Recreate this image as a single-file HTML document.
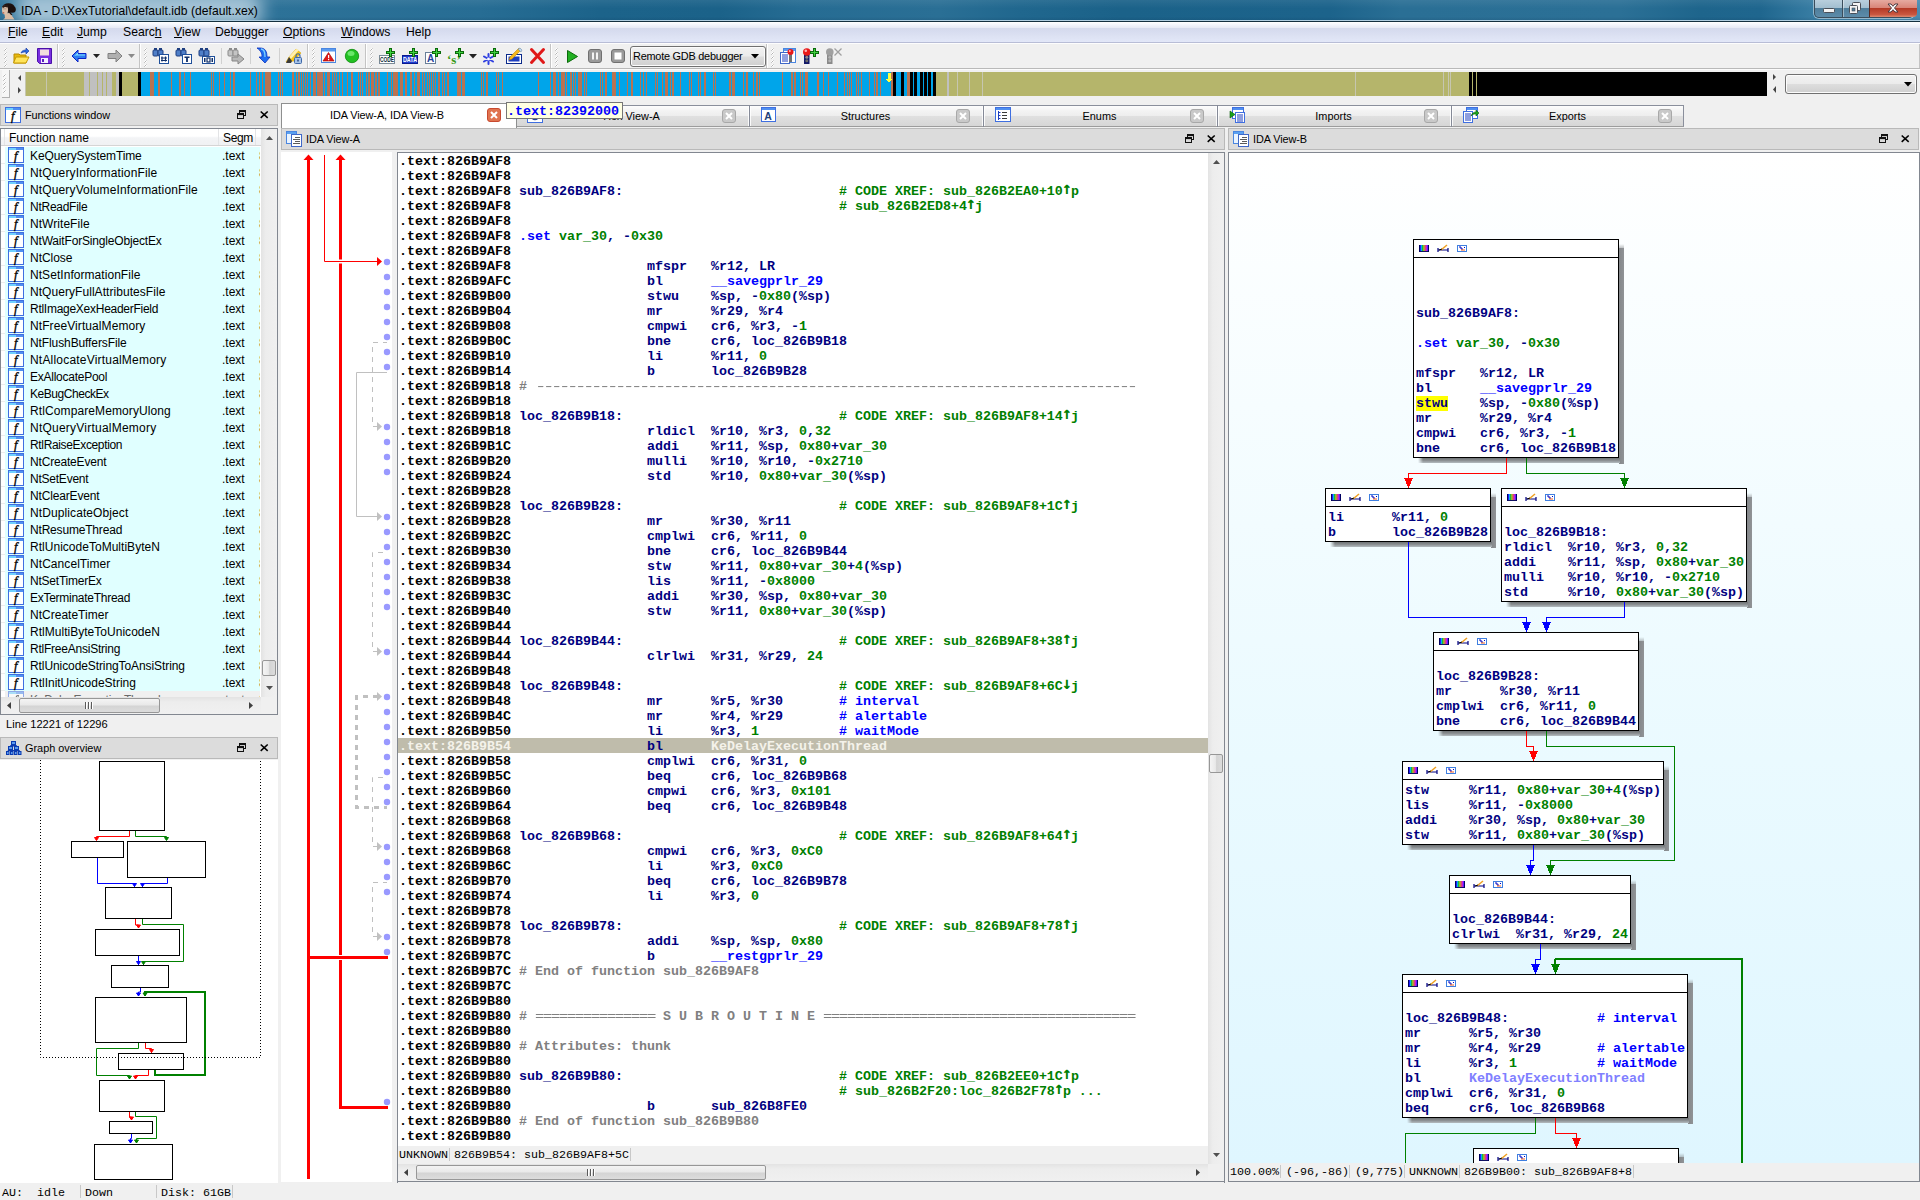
<!DOCTYPE html>
<html lang="en"><head><meta charset="utf-8"><title>IDA - D:\XexTutorial\default.idb (default.xex)</title>
<style>
*{box-sizing:border-box;margin:0;padding:0}
html,body{width:1920px;height:1200px;overflow:hidden;background:#f0f0f0}
body{position:relative;font-family:"Liberation Sans",Arial,sans-serif;font-size:12px;color:#000;line-height:1}
.a{position:absolute}
.t{position:absolute;white-space:pre;line-height:1}
.m{font-family:"Liberation Mono","DejaVu Sans Mono",monospace;font-weight:bold;font-size:13.3333px;line-height:15px;white-space:pre}
.ui{font-size:11px}
svg{position:absolute;overflow:visible}
u{text-decoration:underline;text-underline-offset:1px}
.ar{display:inline-block;width:8px;height:15px;font-family:"DejaVu Sans Mono",monospace;font-weight:bold;font-size:17px;line-height:15px;text-indent:-1.2px;vertical-align:top;position:relative;top:-3px;overflow:visible}
.th{font-weight:normal;display:inline-block;height:15px;vertical-align:top;letter-spacing:-2.4px;transform:scaleX(1.42857);transform-origin:0 50%}
.te.th{letter-spacing:-1.2px;transform:scaleX(1.17647)}
.k{color:#000}.n{color:#000080}.b{color:#0000ff}.g{color:#008000}.y{color:#808080}.w{color:#f4f2ea}.p{color:#8080ff}
</style></head>
<body>
<div class="a " style="left:0px;top:0px;width:1920px;height:22px;background:linear-gradient(93deg,#2d7298 0.00%,#2d7298 14.06%,#276d94 25.00%,#1c638a 31.25%,#1b6289 37.50%,#266c93 41.67%,#2a6f95 48.96%,#20678e 53.12%,#1b6289 58.33%,#1c638b 69.27%,#2a6f95 72.92%,#2b7096 84.38%,#1e658c 88.54%,#1f668e 91.67%,#3b80a6 94.79%,#4a8bb0 100.00%)"></div>
<div class="a " style="left:0px;top:0px;width:1920px;height:21px;background:linear-gradient(180deg,rgba(255,255,255,.07) 0%,rgba(255,255,255,0) 40%,rgba(0,0,0,0) 80%,rgba(0,30,60,.15) 100%)"></div>
<div class="a" style="left:0;top:0;width:400px;height:20px;overflow:hidden"><div class="a" style="left:16px;top:-8px;width:246px;height:36px;border-radius:14px;background:rgba(212,229,240,.72);filter:blur(9px)"></div></div>
<div class="a " style="left:0px;top:20px;width:1920px;height:1px;background:#b0cee0"></div>
<div class="a " style="left:0px;top:21px;width:1920px;height:1px;background:#14303f"></div>
<svg style="left:0px;top:2px" width="17" height="18" viewBox="0 0 17 18" ><path d="M4.500 11.500l.5 4.500-2 1.500h11.500l-4.500-6.500z" fill="#d9bca4"/><ellipse cx="8.5" cy="6" rx="6.3" ry="4.800" fill="#1e1210"/><circle cx="12.5" cy="7.500" r="3.300" fill="#1a0f0d"/><path d="M9.500 9l3 4-1.500 0-2.500-3z" fill="#1e1210"/><ellipse cx="5" cy="8" rx="3" ry="4.500" fill="#dcc1aa"/><path d="M2.200 4.500q2.500-2.500 6-1.500l-1 2.500q-2.500-1-4 .5z" fill="#2a1a15"/><rect x="2.600" y="10.300" width="1.600" height="1.200" fill="#b4533f"/><rect x="3" y="6.500" width="3.500" height=".8" fill="#9a8476"/></svg>
<div class="t " style="left:21px;top:5px;font-size:12.1px;color:#000;letter-spacing:.03px">IDA - D:\XexTutorial\default.idb (default.xex)</div>
<div class="a " style="left:1814px;top:0px;width:100px;height:18px;border:1px solid #3a4d5c;border-top:none;border-radius:0 0 5px 5px;background:linear-gradient(180deg,#b9cfdd 0%,#a3bfd0 45%,#4f7e9b 50%,#5d8caa 100%);box-shadow:0 0 0 1px rgba(255,255,255,.45)"></div>
<div class="a " style="left:1869px;top:0px;width:48px;height:17px;border-radius:0 0 4px 0;background:linear-gradient(180deg,#e6aaa0 0%,#d98578 45%,#b53a26 50%,#c9563f 85%,#dd8a70 100%);border-left:1px solid #5a2a22"></div>
<div class="a " style="left:1842px;top:0px;width:1px;height:17px;background:#3a4d5c"></div>
<div class="a " style="left:1843px;top:0px;width:1px;height:17px;background:rgba(255,255,255,.4)"></div>
<svg style="left:1823px;top:8px" width="12" height="5" viewBox="0 0 12 5" ><rect x="0.5" y="0.5" width="11" height="4" rx="1" fill="#f4f4f4" stroke="#4a4f58"/></svg>
<svg style="left:1849px;top:2px" width="12" height="12" viewBox="0 0 12 12" ><rect x="3.5" y="0.5" width="8" height="8" rx="1" fill="#f4f4f4" stroke="#4a4f58"/><rect x="0.5" y="3.5" width="8" height="8" rx="1" fill="#f4f4f4" stroke="#4a4f58"/><rect x="3" y="6" width="3" height="3" fill="#4f7e9b" stroke="#4a4f58" stroke-width=".6"/></svg>
<svg style="left:1887px;top:3px" width="12" height="10" viewBox="0 0 12 10" ><path d="M1 1h3l2 2.300 2-2.300h3l-3.500 4 3.500 4h-3l-2-2.300-2 2.300h-3l3.500-4z" fill="#fff" stroke="#4a3a40" stroke-width="1" stroke-linejoin="round"/></svg>
<div class="a " style="left:0px;top:22px;width:1920px;height:6px;background:linear-gradient(180deg,#ffffff 0%,#fafbfe 20%,#f0f3fb 55%,#e6e9f4 100%)"></div>
<div class="a " style="left:0px;top:28px;width:1920px;height:14px;background:linear-gradient(180deg,#d4daed 0%,#d8ddf0 30%,#dde2f3 60%,#e2e7f8 100%)"></div>
<div class="a " style="left:0px;top:42px;width:1920px;height:1px;background:#b8bdd6"></div>
<div class="a " style="left:0px;top:43px;width:1920px;height:1px;background:#fdfdfd"></div>
<div class="t " style="left:8px;top:26px;font-size:12.2px"><u>F</u>ile</div>
<div class="t " style="left:42px;top:26px;font-size:12.2px"><u>E</u>dit</div>
<div class="t " style="left:77px;top:26px;font-size:12.2px"><u>J</u>ump</div>
<div class="t " style="left:123px;top:26px;font-size:12.2px">Searc<u>h</u></div>
<div class="t " style="left:174px;top:26px;font-size:12.2px"><u>V</u>iew</div>
<div class="t " style="left:215px;top:26px;font-size:12.2px">Deb<u>u</u>gger</div>
<div class="t " style="left:283px;top:26px;font-size:12.2px"><u>O</u>ptions</div>
<div class="t " style="left:341px;top:26px;font-size:12.2px"><u>W</u>indows</div>
<div class="t " style="left:406px;top:26px;font-size:12.2px">Help</div>
<div class="a " style="left:0px;top:44px;width:1920px;height:25px;background:#f0f0f0"></div>
<div class="a " style="left:0px;top:68px;width:1920px;height:1px;background:#b9b9b9"></div>
<div class="a " style="left:0px;top:69px;width:1920px;height:1px;background:#fbfbfb"></div>
<svg style="left:4px;top:48px" width="4" height="20" viewBox="0 0 4 20" ><rect x="1" y="0" width="2" height="2" fill="#fff"/><rect x="0" y="1" width="2" height="2" fill="#fdfdfd"/><rect x="1" y="1" width="1" height="1" fill="#b0b0b0"/><rect x="0" y="2" width="1" height="1" fill="#c4c4c4"/><rect x="2" y="0" width="1" height="1" fill="#d0d0d0"/><rect x="1" y="4" width="2" height="2" fill="#fff"/><rect x="0" y="5" width="2" height="2" fill="#fdfdfd"/><rect x="1" y="5" width="1" height="1" fill="#b0b0b0"/><rect x="0" y="6" width="1" height="1" fill="#c4c4c4"/><rect x="2" y="4" width="1" height="1" fill="#d0d0d0"/><rect x="1" y="8" width="2" height="2" fill="#fff"/><rect x="0" y="9" width="2" height="2" fill="#fdfdfd"/><rect x="1" y="9" width="1" height="1" fill="#b0b0b0"/><rect x="0" y="10" width="1" height="1" fill="#c4c4c4"/><rect x="2" y="8" width="1" height="1" fill="#d0d0d0"/><rect x="1" y="12" width="2" height="2" fill="#fff"/><rect x="0" y="13" width="2" height="2" fill="#fdfdfd"/><rect x="1" y="13" width="1" height="1" fill="#b0b0b0"/><rect x="0" y="14" width="1" height="1" fill="#c4c4c4"/><rect x="2" y="12" width="1" height="1" fill="#d0d0d0"/><rect x="1" y="16" width="2" height="2" fill="#fff"/><rect x="0" y="17" width="2" height="2" fill="#fdfdfd"/><rect x="1" y="17" width="1" height="1" fill="#b0b0b0"/><rect x="0" y="18" width="1" height="1" fill="#c4c4c4"/><rect x="2" y="16" width="1" height="1" fill="#d0d0d0"/></svg>
<svg style="left:62px;top:48px" width="4" height="20" viewBox="0 0 4 20" ><rect x="1" y="0" width="2" height="2" fill="#fff"/><rect x="0" y="1" width="2" height="2" fill="#fdfdfd"/><rect x="1" y="1" width="1" height="1" fill="#b0b0b0"/><rect x="0" y="2" width="1" height="1" fill="#c4c4c4"/><rect x="2" y="0" width="1" height="1" fill="#d0d0d0"/><rect x="1" y="4" width="2" height="2" fill="#fff"/><rect x="0" y="5" width="2" height="2" fill="#fdfdfd"/><rect x="1" y="5" width="1" height="1" fill="#b0b0b0"/><rect x="0" y="6" width="1" height="1" fill="#c4c4c4"/><rect x="2" y="4" width="1" height="1" fill="#d0d0d0"/><rect x="1" y="8" width="2" height="2" fill="#fff"/><rect x="0" y="9" width="2" height="2" fill="#fdfdfd"/><rect x="1" y="9" width="1" height="1" fill="#b0b0b0"/><rect x="0" y="10" width="1" height="1" fill="#c4c4c4"/><rect x="2" y="8" width="1" height="1" fill="#d0d0d0"/><rect x="1" y="12" width="2" height="2" fill="#fff"/><rect x="0" y="13" width="2" height="2" fill="#fdfdfd"/><rect x="1" y="13" width="1" height="1" fill="#b0b0b0"/><rect x="0" y="14" width="1" height="1" fill="#c4c4c4"/><rect x="2" y="12" width="1" height="1" fill="#d0d0d0"/><rect x="1" y="16" width="2" height="2" fill="#fff"/><rect x="0" y="17" width="2" height="2" fill="#fdfdfd"/><rect x="1" y="17" width="1" height="1" fill="#b0b0b0"/><rect x="0" y="18" width="1" height="1" fill="#c4c4c4"/><rect x="2" y="16" width="1" height="1" fill="#d0d0d0"/></svg>
<svg style="left:144px;top:48px" width="4" height="20" viewBox="0 0 4 20" ><rect x="1" y="0" width="2" height="2" fill="#fff"/><rect x="0" y="1" width="2" height="2" fill="#fdfdfd"/><rect x="1" y="1" width="1" height="1" fill="#b0b0b0"/><rect x="0" y="2" width="1" height="1" fill="#c4c4c4"/><rect x="2" y="0" width="1" height="1" fill="#d0d0d0"/><rect x="1" y="4" width="2" height="2" fill="#fff"/><rect x="0" y="5" width="2" height="2" fill="#fdfdfd"/><rect x="1" y="5" width="1" height="1" fill="#b0b0b0"/><rect x="0" y="6" width="1" height="1" fill="#c4c4c4"/><rect x="2" y="4" width="1" height="1" fill="#d0d0d0"/><rect x="1" y="8" width="2" height="2" fill="#fff"/><rect x="0" y="9" width="2" height="2" fill="#fdfdfd"/><rect x="1" y="9" width="1" height="1" fill="#b0b0b0"/><rect x="0" y="10" width="1" height="1" fill="#c4c4c4"/><rect x="2" y="8" width="1" height="1" fill="#d0d0d0"/><rect x="1" y="12" width="2" height="2" fill="#fff"/><rect x="0" y="13" width="2" height="2" fill="#fdfdfd"/><rect x="1" y="13" width="1" height="1" fill="#b0b0b0"/><rect x="0" y="14" width="1" height="1" fill="#c4c4c4"/><rect x="2" y="12" width="1" height="1" fill="#d0d0d0"/><rect x="1" y="16" width="2" height="2" fill="#fff"/><rect x="0" y="17" width="2" height="2" fill="#fdfdfd"/><rect x="1" y="17" width="1" height="1" fill="#b0b0b0"/><rect x="0" y="18" width="1" height="1" fill="#c4c4c4"/><rect x="2" y="16" width="1" height="1" fill="#d0d0d0"/></svg>
<svg style="left:312px;top:48px" width="4" height="20" viewBox="0 0 4 20" ><rect x="1" y="0" width="2" height="2" fill="#fff"/><rect x="0" y="1" width="2" height="2" fill="#fdfdfd"/><rect x="1" y="1" width="1" height="1" fill="#b0b0b0"/><rect x="0" y="2" width="1" height="1" fill="#c4c4c4"/><rect x="2" y="0" width="1" height="1" fill="#d0d0d0"/><rect x="1" y="4" width="2" height="2" fill="#fff"/><rect x="0" y="5" width="2" height="2" fill="#fdfdfd"/><rect x="1" y="5" width="1" height="1" fill="#b0b0b0"/><rect x="0" y="6" width="1" height="1" fill="#c4c4c4"/><rect x="2" y="4" width="1" height="1" fill="#d0d0d0"/><rect x="1" y="8" width="2" height="2" fill="#fff"/><rect x="0" y="9" width="2" height="2" fill="#fdfdfd"/><rect x="1" y="9" width="1" height="1" fill="#b0b0b0"/><rect x="0" y="10" width="1" height="1" fill="#c4c4c4"/><rect x="2" y="8" width="1" height="1" fill="#d0d0d0"/><rect x="1" y="12" width="2" height="2" fill="#fff"/><rect x="0" y="13" width="2" height="2" fill="#fdfdfd"/><rect x="1" y="13" width="1" height="1" fill="#b0b0b0"/><rect x="0" y="14" width="1" height="1" fill="#c4c4c4"/><rect x="2" y="12" width="1" height="1" fill="#d0d0d0"/><rect x="1" y="16" width="2" height="2" fill="#fff"/><rect x="0" y="17" width="2" height="2" fill="#fdfdfd"/><rect x="1" y="17" width="1" height="1" fill="#b0b0b0"/><rect x="0" y="18" width="1" height="1" fill="#c4c4c4"/><rect x="2" y="16" width="1" height="1" fill="#d0d0d0"/></svg>
<svg style="left:370px;top:48px" width="4" height="20" viewBox="0 0 4 20" ><rect x="1" y="0" width="2" height="2" fill="#fff"/><rect x="0" y="1" width="2" height="2" fill="#fdfdfd"/><rect x="1" y="1" width="1" height="1" fill="#b0b0b0"/><rect x="0" y="2" width="1" height="1" fill="#c4c4c4"/><rect x="2" y="0" width="1" height="1" fill="#d0d0d0"/><rect x="1" y="4" width="2" height="2" fill="#fff"/><rect x="0" y="5" width="2" height="2" fill="#fdfdfd"/><rect x="1" y="5" width="1" height="1" fill="#b0b0b0"/><rect x="0" y="6" width="1" height="1" fill="#c4c4c4"/><rect x="2" y="4" width="1" height="1" fill="#d0d0d0"/><rect x="1" y="8" width="2" height="2" fill="#fff"/><rect x="0" y="9" width="2" height="2" fill="#fdfdfd"/><rect x="1" y="9" width="1" height="1" fill="#b0b0b0"/><rect x="0" y="10" width="1" height="1" fill="#c4c4c4"/><rect x="2" y="8" width="1" height="1" fill="#d0d0d0"/><rect x="1" y="12" width="2" height="2" fill="#fff"/><rect x="0" y="13" width="2" height="2" fill="#fdfdfd"/><rect x="1" y="13" width="1" height="1" fill="#b0b0b0"/><rect x="0" y="14" width="1" height="1" fill="#c4c4c4"/><rect x="2" y="12" width="1" height="1" fill="#d0d0d0"/><rect x="1" y="16" width="2" height="2" fill="#fff"/><rect x="0" y="17" width="2" height="2" fill="#fdfdfd"/><rect x="1" y="17" width="1" height="1" fill="#b0b0b0"/><rect x="0" y="18" width="1" height="1" fill="#c4c4c4"/><rect x="2" y="16" width="1" height="1" fill="#d0d0d0"/></svg>
<svg style="left:555px;top:48px" width="4" height="20" viewBox="0 0 4 20" ><rect x="1" y="0" width="2" height="2" fill="#fff"/><rect x="0" y="1" width="2" height="2" fill="#fdfdfd"/><rect x="1" y="1" width="1" height="1" fill="#b0b0b0"/><rect x="0" y="2" width="1" height="1" fill="#c4c4c4"/><rect x="2" y="0" width="1" height="1" fill="#d0d0d0"/><rect x="1" y="4" width="2" height="2" fill="#fff"/><rect x="0" y="5" width="2" height="2" fill="#fdfdfd"/><rect x="1" y="5" width="1" height="1" fill="#b0b0b0"/><rect x="0" y="6" width="1" height="1" fill="#c4c4c4"/><rect x="2" y="4" width="1" height="1" fill="#d0d0d0"/><rect x="1" y="8" width="2" height="2" fill="#fff"/><rect x="0" y="9" width="2" height="2" fill="#fdfdfd"/><rect x="1" y="9" width="1" height="1" fill="#b0b0b0"/><rect x="0" y="10" width="1" height="1" fill="#c4c4c4"/><rect x="2" y="8" width="1" height="1" fill="#d0d0d0"/><rect x="1" y="12" width="2" height="2" fill="#fff"/><rect x="0" y="13" width="2" height="2" fill="#fdfdfd"/><rect x="1" y="13" width="1" height="1" fill="#b0b0b0"/><rect x="0" y="14" width="1" height="1" fill="#c4c4c4"/><rect x="2" y="12" width="1" height="1" fill="#d0d0d0"/><rect x="1" y="16" width="2" height="2" fill="#fff"/><rect x="0" y="17" width="2" height="2" fill="#fdfdfd"/><rect x="1" y="17" width="1" height="1" fill="#b0b0b0"/><rect x="0" y="18" width="1" height="1" fill="#c4c4c4"/><rect x="2" y="16" width="1" height="1" fill="#d0d0d0"/></svg>
<svg style="left:771px;top:48px" width="4" height="20" viewBox="0 0 4 20" ><rect x="1" y="0" width="2" height="2" fill="#fff"/><rect x="0" y="1" width="2" height="2" fill="#fdfdfd"/><rect x="1" y="1" width="1" height="1" fill="#b0b0b0"/><rect x="0" y="2" width="1" height="1" fill="#c4c4c4"/><rect x="2" y="0" width="1" height="1" fill="#d0d0d0"/><rect x="1" y="4" width="2" height="2" fill="#fff"/><rect x="0" y="5" width="2" height="2" fill="#fdfdfd"/><rect x="1" y="5" width="1" height="1" fill="#b0b0b0"/><rect x="0" y="6" width="1" height="1" fill="#c4c4c4"/><rect x="2" y="4" width="1" height="1" fill="#d0d0d0"/><rect x="1" y="8" width="2" height="2" fill="#fff"/><rect x="0" y="9" width="2" height="2" fill="#fdfdfd"/><rect x="1" y="9" width="1" height="1" fill="#b0b0b0"/><rect x="0" y="10" width="1" height="1" fill="#c4c4c4"/><rect x="2" y="8" width="1" height="1" fill="#d0d0d0"/><rect x="1" y="12" width="2" height="2" fill="#fff"/><rect x="0" y="13" width="2" height="2" fill="#fdfdfd"/><rect x="1" y="13" width="1" height="1" fill="#b0b0b0"/><rect x="0" y="14" width="1" height="1" fill="#c4c4c4"/><rect x="2" y="12" width="1" height="1" fill="#d0d0d0"/><rect x="1" y="16" width="2" height="2" fill="#fff"/><rect x="0" y="17" width="2" height="2" fill="#fdfdfd"/><rect x="1" y="17" width="1" height="1" fill="#b0b0b0"/><rect x="0" y="18" width="1" height="1" fill="#c4c4c4"/><rect x="2" y="16" width="1" height="1" fill="#d0d0d0"/></svg>
<div class="a " style="left:57px;top:44px;width:1px;height:24px;background:#c4c4c4"></div><div class="a " style="left:58px;top:44px;width:1px;height:24px;background:#fff"></div>
<div class="a " style="left:139px;top:44px;width:1px;height:24px;background:#c4c4c4"></div><div class="a " style="left:140px;top:44px;width:1px;height:24px;background:#fff"></div>
<div class="a " style="left:307px;top:44px;width:1px;height:24px;background:#c4c4c4"></div><div class="a " style="left:308px;top:44px;width:1px;height:24px;background:#fff"></div>
<div class="a " style="left:365px;top:44px;width:1px;height:24px;background:#c4c4c4"></div><div class="a " style="left:366px;top:44px;width:1px;height:24px;background:#fff"></div>
<div class="a " style="left:550px;top:44px;width:1px;height:24px;background:#c4c4c4"></div><div class="a " style="left:551px;top:44px;width:1px;height:24px;background:#fff"></div>
<div class="a " style="left:766px;top:44px;width:1px;height:24px;background:#c4c4c4"></div><div class="a " style="left:767px;top:44px;width:1px;height:24px;background:#fff"></div>
<div class="a " style="left:1919px;top:44px;width:1px;height:24px;background:#c4c4c4"></div>
<div class="a " style="left:221px;top:48px;width:1px;height:16px;background:#d0d0d0"></div>
<div class="a " style="left:250px;top:48px;width:1px;height:16px;background:#d0d0d0"></div>
<div class="a " style="left:279px;top:48px;width:1px;height:16px;background:#d0d0d0"></div>
<svg style="left:13px;top:48px" width="16" height="16" viewBox="0 0 16 16" ><path d="M1 6h5l1 1h6v8H1z" fill="#e8b90c" stroke="#b98a00"/><path d="M0.5 15L3 9h13l-3 6z" fill="#ffe45a" stroke="#c79a00"/><path d="M8 5c1-3 4-3 5-3V0l3 3-3 3V4c-2 0-3 0-5 1z" fill="#2f6be0" stroke="#0a2fa0" stroke-width=".6"/></svg>
<svg style="left:37px;top:48px" width="16" height="16" viewBox="0 0 16 16" ><path d="M0.5 0.5h14v15h-12l-2-2z" fill="#7a2fe0" stroke="#4a10a8"/><rect x="3" y="1.5" width="9" height="6" fill="#f2dede"/><rect x="4" y="10" width="7" height="5" fill="#f4f0ff"/><rect x="5" y="11" width="2" height="3" fill="#5a20c0"/></svg>
<svg style="left:72px;top:50px" width="16" height="16" viewBox="0 0 16 16" ><path d="M0 6L6 0v3.5h8v5H6V12z" fill="#2f7df0" stroke="#0a22c8" stroke-width="1"/><path d="M2 6l4-3.5v2h7v1H4z" fill="#7fe0ff"/></svg>
<svg style="left:93px;top:54px" width="16" height="16" viewBox="0 0 16 16" ><path d="M0 0h7L3.5 4z" fill="#222"/></svg>
<svg style="left:108px;top:50px" width="16" height="16" viewBox="0 0 16 16" ><path d="M14 6L8 0v3.5H0v5h8V12z" fill="#b0b0b0" stroke="#808080" stroke-width="1"/></svg>
<svg style="left:128px;top:54px" width="16" height="16" viewBox="0 0 16 16" ><path d="M0 0h7L3.5 4z" fill="#8a8a8a"/></svg>
<svg style="left:153px;top:48px" width="16" height="16" viewBox="0 0 16 16" ><rect x="1" y="0" width="3" height="2" fill="#1f3f80"/><rect x="6" y="0" width="3" height="2" fill="#1f3f80"/><rect x="0" y="2" width="5" height="6" rx="1" fill="#4f7fc8" stroke="#1f3f80" stroke-width="1"/><rect x="5" y="2" width="5" height="6" rx="1" fill="#4f7fc8" stroke="#1f3f80" stroke-width="1"/><rect x="6.5" y="6.5" width="9" height="9" fill="#fff" stroke="#1f4f9a"/><path d="M9 8.5v5M12.5 8.5v5M8 10h6M8 12.5h6" stroke="#10306a" stroke-width="1.2" fill="none"/></svg>
<svg style="left:176px;top:48px" width="16" height="16" viewBox="0 0 16 16" ><rect x="1" y="0" width="3" height="2" fill="#1f3f80"/><rect x="6" y="0" width="3" height="2" fill="#1f3f80"/><rect x="0" y="2" width="5" height="6" rx="1" fill="#4f7fc8" stroke="#1f3f80" stroke-width="1"/><rect x="5" y="2" width="5" height="6" rx="1" fill="#4f7fc8" stroke="#1f3f80" stroke-width="1"/><rect x="6.5" y="6.5" width="9" height="9" fill="#fff" stroke="#1f4f9a"/><path d="M8.5 8.5h5v1.5h-1.6v4h-1.8v-4H8.5z" fill="#10306a"/></svg>
<svg style="left:199px;top:48px" width="16" height="16" viewBox="0 0 16 16" ><rect x="1" y="0" width="3" height="2" fill="#1f3f80"/><rect x="6" y="0" width="3" height="2" fill="#1f3f80"/><rect x="0" y="2" width="5" height="6" rx="1" fill="#4f7fc8" stroke="#1f3f80" stroke-width="1"/><rect x="5" y="2" width="5" height="6" rx="1" fill="#4f7fc8" stroke="#1f3f80" stroke-width="1"/><rect x="3.5" y="8.5" width="12" height="7" fill="#fff" stroke="#1f4f9a"/><rect x="5" y="10" width="1.5" height="4" fill="#10306a"/><rect x="8" y="10" width="3" height="4" fill="none" stroke="#10306a" stroke-width="1.2"/><rect x="12.5" y="10" width="1.5" height="4" fill="#10306a"/></svg>
<svg style="left:228px;top:48px" width="16" height="16" viewBox="0 0 16 16" ><rect x="1" y="0" width="3" height="2" fill="#8a8a8a"/><rect x="6" y="0" width="3" height="2" fill="#8a8a8a"/><rect x="0" y="2" width="5" height="6" rx="1" fill="#c4c4c4" stroke="#8a8a8a" stroke-width="1"/><rect x="5" y="2" width="5" height="6" rx="1" fill="#c4c4c4" stroke="#8a8a8a" stroke-width="1"/><path d="M4 9h6V6l6 5-6 5v-3H4z" fill="#b8b8b8" stroke="#858585"/></svg>
<svg style="left:258px;top:48px" width="16" height="16" viewBox="0 0 16 16" ><path d="M2 0c5 0 7 3 7 9h3l-5 6-6-6h3c0-4-1-6-5-9z" fill="#1f6df0" stroke="#0a30c0" stroke-width=".8"/><path d="M3 1c3 0 4 3 4 8" stroke="#7fd0ff" stroke-width="1.3" fill="none"/></svg>
<svg style="left:286px;top:48px" width="16" height="16" viewBox="0 0 16 16" ><path d="M0 14l3-5 7-8 5 4-7 8z" fill="#f6c61a" stroke="#d09a00" stroke-width=".5"/><path d="M3 9l7-8 3 1-8 9z" fill="#fff0b0"/><path d="M3 9l3 4-1 2H0z" fill="#3a3a3a"/><rect x="8.5" y="9.5" width="7" height="6" rx="1" fill="#a8c4e8" stroke="#3f68a8"/><path d="M10 9.5V8c0-3 4-3 4 0v1.5" fill="none" stroke="#3f68a8" stroke-width="1.2"/><rect x="11.3" y="11.5" width="1.4" height="2" fill="#1f3f7a"/></svg>
<svg style="left:321px;top:48px" width="16" height="16" viewBox="0 0 16 16" ><rect x="0.5" y="0.5" width="14" height="14" fill="#fff" stroke="#4a86e0"/><rect x="1" y="1" width="13" height="2.5" fill="#5a9af0"/><path d="M7.5 4.5l5.5 8.5H2z" fill="#e01818" stroke="#a00000" stroke-width=".6"/><rect x="7" y="7" width="1.2" height="3.2" fill="#fff"/><rect x="7" y="11" width="1.2" height="1.2" fill="#fff"/></svg>
<svg style="left:345px;top:49px" width="16" height="16" viewBox="0 0 16 16" ><circle cx="7" cy="7" r="6.7" fill="#22c022" stroke="#0a8a0a" stroke-width=".8"/><ellipse cx="6" cy="4.5" rx="3.5" ry="2.5" fill="#7df07d" opacity=".8"/></svg>
<svg style="left:379px;top:48px" width="16" height="16" viewBox="0 0 16 16" ><rect x="0.5" y="7.5" width="15" height="8" fill="#fff" stroke="#7a8a98"/><text x="1" y="14.3" font-family="Liberation Sans" font-weight="bold" font-size="6.5" fill="#0a2a3a" textLength="14" lengthAdjust="spacingAndGlyphs">CODE</text><path d="M10 0h3v3h3v3h-3v3h-3v-3h-3v-3h3z" fill="#0a6a0a"/><path d="M11 1h1v3h3v1h-3v3h-1v-3h-3v-1h3z" fill="#3fd03f"/></svg>
<svg style="left:402px;top:48px" width="16" height="16" viewBox="0 0 16 16" ><rect x="0.5" y="7.5" width="15" height="8" fill="#1f3fd0" stroke="#0a1a90"/><text x="1" y="14.3" font-family="Liberation Sans" font-weight="bold" font-size="6.5" fill="#fff" textLength="14" lengthAdjust="spacingAndGlyphs">DATA</text><path d="M10 0h3v3h3v3h-3v3h-3v-3h-3v-3h3z" fill="#0a6a0a"/><path d="M11 1h1v3h3v1h-3v3h-1v-3h-3v-1h3z" fill="#3fd03f"/></svg>
<svg style="left:425px;top:48px" width="16" height="16" viewBox="0 0 16 16" ><rect x="0.5" y="4.5" width="10" height="11" fill="#fff" stroke="#6a7f98"/><text x="2" y="14" font-family="Liberation Sans" font-weight="bold" font-size="10" fill="#1f3f9a">A</text><path d="M10 0h3v3h3v3h-3v3h-3v-3h-3v-3h3z" fill="#0a6a0a"/><path d="M11 1h1v3h3v1h-3v3h-1v-3h-3v-1h3z" fill="#3fd03f"/></svg>
<svg style="left:447px;top:48px" width="16" height="16" viewBox="0 0 16 16" ><text x="0" y="16" font-family="Liberation Serif" font-weight="bold" font-size="13" fill="#3a9a1a">‘s’</text><path d="M11 0h3v3h3v3h-3v3h-3v-3h-3v-3h3z" fill="#0a6a0a"/><path d="M12 1h1v3h3v1h-3v3h-1v-3h-3v-1h3z" fill="#3fd03f"/></svg>
<svg style="left:469px;top:54px" width="16" height="16" viewBox="0 0 16 16" ><path d="M0 0h8L4 4.5z" fill="#222"/></svg>
<svg style="left:483px;top:48px" width="16" height="16" viewBox="0 0 16 16" ><g stroke="#2f3fe0" stroke-width="2" stroke-linecap="round"><path d="M5.5 6v10M1 8.5l9 5M1 13.5l9-5"/></g><circle cx="5.5" cy="11" r="1.4" fill="#fff"/><path d="M10 0h3v3h3v3h-3v3h-3v-3h-3v-3h3z" fill="#0a6a0a"/><path d="M11 1h1v3h3v1h-3v3h-1v-3h-3v-1h3z" fill="#3fd03f"/></svg>
<svg style="left:506px;top:48px" width="16" height="16" viewBox="0 0 16 16" ><rect x="0.5" y="6.5" width="15" height="9" fill="#fff" stroke="#0a2a8a"/><rect x="2.5" y="8.5" width="11" height="5" fill="#1f3fc0"/><path d="M3 12l1-3 9-9 2 2-9 9z" fill="#f6b81a" stroke="#b07800" stroke-width=".5"/><path d="M12 1l2-1 2 2-1 2z" fill="#c0d8f0" stroke="#6080a0" stroke-width=".5"/></svg>
<svg style="left:530px;top:48px" width="16" height="16" viewBox="0 0 16 16" ><path d="M1.5 1.5l12 13M13.5 1.5l-12 13" stroke="#e01818" stroke-width="3" stroke-linecap="round"/></svg>
<svg style="left:567px;top:50px" width="16" height="16" viewBox="0 0 16 16" ><path d="M0.5 0.5l10 6-10 6z" fill="#22b022" stroke="#0a6a0a"/></svg>
<svg style="left:588px;top:49px" width="16" height="16" viewBox="0 0 16 16" ><rect x="0.5" y="0.5" width="13" height="13" rx="2.5" fill="#9a9a9a" stroke="#707070"/><rect x="4" y="3.5" width="2" height="7" fill="#f4f4f4"/><rect x="8" y="3.5" width="2" height="7" fill="#f4f4f4"/></svg>
<svg style="left:611px;top:49px" width="16" height="16" viewBox="0 0 16 16" ><rect x="0.5" y="0.5" width="13" height="13" rx="2.5" fill="#9a9a9a" stroke="#707070"/><rect x="3.5" y="3.5" width="7" height="7" fill="#fff"/></svg>
<svg style="left:780px;top:48px" width="16" height="16" viewBox="0 0 16 16" ><rect x="3.5" y="0.5" width="12" height="14" fill="#fff" stroke="#4a86e0"/><rect x="4" y="1" width="11" height="2" fill="#5a9af0"/><rect x="0.5" y="4.5" width="9" height="11" fill="#fff" stroke="#3f68c8"/><path d="M2 7h6M2 9h6M2 11h6M2 13h6" stroke="#1f3fc0" stroke-width="1"/><rect x="9" y="6" width="3" height="8" fill="#707070"/><circle cx="10.5" cy="4" r="3" fill="#e81818"/><circle cx="9.8" cy="3" r="1" fill="#ffb0b0"/></svg>
<svg style="left:803px;top:48px" width="16" height="16" viewBox="0 0 16 16" ><rect x="1" y="6" width="5.5" height="10" fill="#101868"/><circle cx="3.8" cy="12.8" r="1.5" fill="#6a6a6a"/><circle cx="3.8" cy="9.3" r="1.5" fill="#8a8a8a"/><circle cx="3.8" cy="4" r="3.8" fill="#e81818"/><circle cx="2.8" cy="2.8" r="1.3" fill="#ffb0b0"/><path d="M10 0h3v3h3v3h-3v3h-3v-3h-3v-3h3z" fill="#0a6a0a"/><path d="M11 1h1v3h3v1h-3v3h-1v-3h-3v-1h3z" fill="#3fd03f"/></svg>
<svg style="left:826px;top:48px" width="16" height="16" viewBox="0 0 16 16" ><rect x="1" y="6" width="5.5" height="10" fill="#8a8a8a"/><circle cx="3.8" cy="12.8" r="1.5" fill="#b4b4b4"/><circle cx="3.8" cy="9.3" r="1.5" fill="#b4b4b4"/><circle cx="3.8" cy="4" r="3.8" fill="#a0a0a0"/><path d="M8.5 0.5l7 7M15.5 0.5l-7 7" stroke="#a0a0a0" stroke-width="1.3"/></svg>
<div class="a " style="left:630px;top:46px;width:136px;height:21px;border:1px solid #707070;border-radius:3px;background:linear-gradient(180deg,#f2f2f2 0%,#ebebeb 48%,#dddddd 52%,#cfcfcf 100%);box-shadow:inset 0 0 0 1px #fcfcfc"></div>
<div class="t " style="left:633px;top:51px;font-size:10.9px;letter-spacing:-0.227px">Remote GDB debugger</div>
<svg style="left:751px;top:54px" width="8" height="5" viewBox="0 0 8 5" ><path d="M0 0h8L4 4.5z" fill="#000"/></svg>
<div class="a " style="left:0px;top:70px;width:1920px;height:30px;background:#f0f0f0"></div>
<div class="a " style="left:2px;top:70px;width:8px;height:28px;background:#f6f6f6;border-right:1px solid #b0b0b0;border-bottom:1px solid #b0b0b0"></div>
<svg style="left:3px;top:74px" width="4" height="20" viewBox="0 0 4 20" ><rect x="1" y="0" width="2" height="2" fill="#fff"/><rect x="0" y="1" width="2" height="2" fill="#fdfdfd"/><rect x="1" y="1" width="1" height="1" fill="#b0b0b0"/><rect x="0" y="2" width="1" height="1" fill="#c4c4c4"/><rect x="2" y="0" width="1" height="1" fill="#d0d0d0"/><rect x="1" y="4" width="2" height="2" fill="#fff"/><rect x="0" y="5" width="2" height="2" fill="#fdfdfd"/><rect x="1" y="5" width="1" height="1" fill="#b0b0b0"/><rect x="0" y="6" width="1" height="1" fill="#c4c4c4"/><rect x="2" y="4" width="1" height="1" fill="#d0d0d0"/><rect x="1" y="8" width="2" height="2" fill="#fff"/><rect x="0" y="9" width="2" height="2" fill="#fdfdfd"/><rect x="1" y="9" width="1" height="1" fill="#b0b0b0"/><rect x="0" y="10" width="1" height="1" fill="#c4c4c4"/><rect x="2" y="8" width="1" height="1" fill="#d0d0d0"/><rect x="1" y="12" width="2" height="2" fill="#fff"/><rect x="0" y="13" width="2" height="2" fill="#fdfdfd"/><rect x="1" y="13" width="1" height="1" fill="#b0b0b0"/><rect x="0" y="14" width="1" height="1" fill="#c4c4c4"/><rect x="2" y="12" width="1" height="1" fill="#d0d0d0"/><rect x="1" y="16" width="2" height="2" fill="#fff"/><rect x="0" y="17" width="2" height="2" fill="#fdfdfd"/><rect x="1" y="17" width="1" height="1" fill="#b0b0b0"/><rect x="0" y="18" width="1" height="1" fill="#c4c4c4"/><rect x="2" y="16" width="1" height="1" fill="#d0d0d0"/></svg>
<svg style="left:17px;top:75px" width="5" height="20" viewBox="0 0 5 20" ><path d="M4 0v6L1 3z" fill="#444"/><path d="M1 12v6.500l3-3.250z" fill="#444"/></svg>
<div class="a " style="left:25px;top:72px;width:59px;height:24px;background:#b5b56b"></div>
<div class="a " style="left:84px;top:72px;width:35px;height:24px;background:#c0c0c0"></div>
<div class="a " style="left:119px;top:72px;width:3px;height:24px;background:#000"></div>
<div class="a " style="left:122px;top:72px;width:16px;height:24px;background:#b5b56b"></div>
<div class="a " style="left:138px;top:72px;width:3px;height:24px;background:#000"></div>
<div class="a " style="left:141px;top:72px;width:751px;height:24px;background:#00a5ea"></div>
<div class="a " style="left:892px;top:72px;width:44px;height:24px;background:#00a5ea"></div>
<div class="a " style="left:936px;top:72px;width:533px;height:24px;background:#b5b56b"></div>
<div class="a " style="left:1469px;top:72px;width:298px;height:24px;background:#000"></div>
<svg style="left:25px;top:72px" width="1743" height="24" viewBox="0 0 1743 24" shape-rendering="crispEdges"><rect x="64" y="0" width="1" height="24" fill="#b5b56b"/><rect x="72" y="0" width="1" height="24" fill="#b5b56b"/><rect x="77" y="0" width="1" height="24" fill="#b5b56b"/><rect x="81" y="0" width="1" height="24" fill="#b5b56b"/><rect x="87" y="0" width="4" height="24" fill="#b5b56b"/><rect x="1447" y="0" width="1" height="24" fill="#b5b56b"/><rect x="1451" y="0" width="1" height="24" fill="#b5b56b"/><rect x="0" y="0" width="1" height="24" fill="#c6c6b0"/><rect x="21" y="0" width="1" height="24" fill="#c6c6b0"/><rect x="932" y="0" width="1" height="24" fill="#c6c6b0"/><rect x="944" y="0" width="1" height="24" fill="#c6c6b0"/><rect x="957" y="0" width="1" height="24" fill="#c6c6b0"/><rect x="1330" y="0" width="1" height="24" fill="#c6c6b0"/><rect x="1418" y="0" width="1" height="24" fill="#c6c6b0"/><rect x="1423" y="0" width="1" height="24" fill="#c6c6b0"/><rect x="1425" y="0" width="1" height="24" fill="#c6c6b0"/><rect x="125" y="0" width="4" height="24" fill="#b87352"/><rect x="133" y="0" width="2" height="24" fill="#b87352"/><rect x="146" y="0" width="1" height="24" fill="#b87352"/><rect x="154" y="0" width="2" height="24" fill="#b87352"/><rect x="159" y="0" width="1" height="24" fill="#b87352"/><rect x="165" y="0" width="1" height="24" fill="#b87352"/><rect x="186" y="0" width="1" height="24" fill="#b87352"/><rect x="188" y="0" width="1" height="24" fill="#b87352"/><rect x="194" y="0" width="1" height="24" fill="#b87352"/><rect x="199" y="0" width="1" height="24" fill="#b87352"/><rect x="205" y="0" width="1" height="24" fill="#b87352"/><rect x="208" y="0" width="2" height="24" fill="#b87352"/><rect x="225" y="0" width="1" height="24" fill="#b87352"/><rect x="231" y="0" width="1" height="24" fill="#b87352"/><rect x="234" y="0" width="1" height="24" fill="#b87352"/><rect x="237" y="0" width="1" height="24" fill="#b87352"/><rect x="240" y="0" width="6" height="24" fill="#b87352"/><rect x="253" y="0" width="1" height="24" fill="#b87352"/><rect x="255" y="0" width="1" height="24" fill="#b87352"/><rect x="257" y="0" width="1" height="24" fill="#b87352"/><rect x="267" y="0" width="2" height="24" fill="#b87352"/><rect x="271" y="0" width="1" height="24" fill="#b87352"/><rect x="273" y="0" width="2" height="24" fill="#b87352"/><rect x="276" y="0" width="1" height="24" fill="#b87352"/><rect x="278" y="0" width="1" height="24" fill="#b87352"/><rect x="280" y="0" width="1" height="24" fill="#b87352"/><rect x="282" y="0" width="1" height="24" fill="#b87352"/><rect x="285" y="0" width="1" height="24" fill="#b87352"/><rect x="288" y="0" width="3" height="24" fill="#b87352"/><rect x="292" y="0" width="6" height="24" fill="#b87352"/><rect x="299" y="0" width="1" height="24" fill="#b87352"/><rect x="302" y="0" width="3" height="24" fill="#b87352"/><rect x="307" y="0" width="1" height="24" fill="#b87352"/><rect x="309" y="0" width="1" height="24" fill="#b87352"/><rect x="311" y="0" width="1" height="24" fill="#b87352"/><rect x="314" y="0" width="1" height="24" fill="#b87352"/><rect x="317" y="0" width="1" height="24" fill="#b87352"/><rect x="322" y="0" width="1" height="24" fill="#b87352"/><rect x="326" y="0" width="2" height="24" fill="#b87352"/><rect x="333" y="0" width="1" height="24" fill="#b87352"/><rect x="335" y="0" width="1" height="24" fill="#b87352"/><rect x="337" y="0" width="1" height="24" fill="#b87352"/><rect x="341" y="0" width="1" height="24" fill="#b87352"/><rect x="343" y="0" width="2" height="24" fill="#b87352"/><rect x="346" y="0" width="3" height="24" fill="#b87352"/><rect x="350" y="0" width="2" height="24" fill="#b87352"/><rect x="353" y="0" width="2" height="24" fill="#b87352"/><rect x="362" y="0" width="1" height="24" fill="#b87352"/><rect x="366" y="0" width="1" height="24" fill="#b87352"/><rect x="368" y="0" width="5" height="24" fill="#b87352"/><rect x="375" y="0" width="3" height="24" fill="#b87352"/><rect x="380" y="0" width="2" height="24" fill="#b87352"/><rect x="385" y="0" width="2" height="24" fill="#b87352"/><rect x="389" y="0" width="1" height="24" fill="#b87352"/><rect x="392" y="0" width="3" height="24" fill="#b87352"/><rect x="397" y="0" width="1" height="24" fill="#b87352"/><rect x="399" y="0" width="1" height="24" fill="#b87352"/><rect x="402" y="0" width="1" height="24" fill="#b87352"/><rect x="404" y="0" width="1" height="24" fill="#b87352"/><rect x="406" y="0" width="1" height="24" fill="#b87352"/><rect x="408" y="0" width="1" height="24" fill="#b87352"/><rect x="410" y="0" width="1" height="24" fill="#b87352"/><rect x="413" y="0" width="2" height="24" fill="#b87352"/><rect x="417" y="0" width="1" height="24" fill="#b87352"/><rect x="419" y="0" width="1" height="24" fill="#b87352"/><rect x="422" y="0" width="2" height="24" fill="#b87352"/><rect x="432" y="0" width="4" height="24" fill="#b87352"/><rect x="437" y="0" width="3" height="24" fill="#b87352"/><rect x="456" y="0" width="1" height="24" fill="#b87352"/><rect x="458" y="0" width="1" height="24" fill="#b87352"/><rect x="461" y="0" width="2" height="24" fill="#b87352"/><rect x="471" y="0" width="1" height="24" fill="#b87352"/><rect x="473" y="0" width="1" height="24" fill="#b87352"/><rect x="477" y="0" width="1" height="24" fill="#b87352"/><rect x="513" y="0" width="1" height="24" fill="#b87352"/><rect x="525" y="0" width="1" height="24" fill="#b87352"/><rect x="528" y="0" width="3" height="24" fill="#b87352"/><rect x="533" y="0" width="1" height="24" fill="#b87352"/><rect x="536" y="0" width="4" height="24" fill="#b87352"/><rect x="541" y="0" width="1" height="24" fill="#b87352"/><rect x="545" y="0" width="2" height="24" fill="#b87352"/><rect x="548" y="0" width="1" height="24" fill="#b87352"/><rect x="550" y="0" width="1" height="24" fill="#b87352"/><rect x="553" y="0" width="4" height="24" fill="#b87352"/><rect x="559" y="0" width="1" height="24" fill="#b87352"/><rect x="561" y="0" width="1" height="24" fill="#b87352"/><rect x="575" y="0" width="1" height="24" fill="#b87352"/><rect x="577" y="0" width="1" height="24" fill="#b87352"/><rect x="580" y="0" width="2" height="24" fill="#b87352"/><rect x="587" y="0" width="4" height="24" fill="#b87352"/><rect x="594" y="0" width="1" height="24" fill="#b87352"/><rect x="602" y="0" width="1" height="24" fill="#b87352"/><rect x="606" y="0" width="2" height="24" fill="#b87352"/><rect x="615" y="0" width="1" height="24" fill="#b87352"/><rect x="618" y="0" width="1" height="24" fill="#b87352"/><rect x="621" y="0" width="1" height="24" fill="#b87352"/><rect x="630" y="0" width="1" height="24" fill="#b87352"/><rect x="632" y="0" width="1" height="24" fill="#b87352"/><rect x="637" y="0" width="1" height="24" fill="#b87352"/><rect x="640" y="0" width="3" height="24" fill="#b87352"/><rect x="645" y="0" width="1" height="24" fill="#b87352"/><rect x="647" y="0" width="2" height="24" fill="#b87352"/><rect x="655" y="0" width="1" height="24" fill="#b87352"/><rect x="664" y="0" width="1" height="24" fill="#b87352"/><rect x="666" y="0" width="1" height="24" fill="#b87352"/><rect x="673" y="0" width="1" height="24" fill="#b87352"/><rect x="675" y="0" width="1" height="24" fill="#b87352"/><rect x="679" y="0" width="2" height="24" fill="#b87352"/><rect x="688" y="0" width="1" height="24" fill="#b87352"/><rect x="690" y="0" width="1" height="24" fill="#b87352"/><rect x="704" y="0" width="2" height="24" fill="#b87352"/><rect x="707" y="0" width="3" height="24" fill="#b87352"/><rect x="718" y="0" width="1" height="24" fill="#b87352"/><rect x="721" y="0" width="2" height="24" fill="#b87352"/><rect x="728" y="0" width="1" height="24" fill="#b87352"/><rect x="731" y="0" width="2" height="24" fill="#b87352"/><rect x="734" y="0" width="1" height="24" fill="#b87352"/><rect x="757" y="0" width="1" height="24" fill="#b87352"/><rect x="766" y="0" width="2" height="24" fill="#b87352"/><rect x="769" y="0" width="2" height="24" fill="#b87352"/><rect x="775" y="0" width="1" height="24" fill="#b87352"/><rect x="777" y="0" width="1" height="24" fill="#b87352"/><rect x="780" y="0" width="3" height="24" fill="#b87352"/><rect x="792" y="0" width="2" height="24" fill="#b87352"/><rect x="798" y="0" width="1" height="24" fill="#b87352"/><rect x="803" y="0" width="1" height="24" fill="#b87352"/><rect x="812" y="0" width="1" height="24" fill="#b87352"/><rect x="819" y="0" width="1" height="24" fill="#b87352"/><rect x="822" y="0" width="1" height="24" fill="#b87352"/><rect x="824" y="0" width="1" height="24" fill="#b87352"/><rect x="826" y="0" width="1" height="24" fill="#b87352"/><rect x="831" y="0" width="1" height="24" fill="#b87352"/><rect x="833" y="0" width="1" height="24" fill="#b87352"/><rect x="836" y="0" width="1" height="24" fill="#b87352"/><rect x="844" y="0" width="1" height="24" fill="#b87352"/><rect x="849" y="0" width="1" height="24" fill="#b87352"/><rect x="851" y="0" width="2" height="24" fill="#b87352"/><rect x="855" y="0" width="1" height="24" fill="#b87352"/><rect x="866" y="0" width="2" height="24" fill="#b87352"/><rect x="882" y="0" width="3" height="24" fill="#b87352"/><rect x="868" y="0" width="3" height="24" fill="#000"/><rect x="876" y="0" width="3" height="24" fill="#000"/><rect x="885" y="0" width="3" height="24" fill="#000"/><rect x="889" y="0" width="3" height="24" fill="#000"/><rect x="895" y="0" width="3" height="24" fill="#000"/><rect x="899" y="0" width="3" height="24" fill="#000"/><rect x="903" y="0" width="3" height="24" fill="#000"/><rect x="908" y="0" width="3" height="24" fill="#000"/><rect x="922" y="0" width="2" height="24" fill="#c0c0c0"/><path d="M862.5 1h3v6h2l-3.5 4-3.5-4h2z" fill="#ffff40"/></svg>
<svg style="left:1772px;top:74px" width="5" height="20" viewBox="0 0 5 20" ><path d="M1 0v6l3-3z" fill="#444"/><path d="M4 12v7L1 15.5z" fill="#444"/></svg>
<div class="a " style="left:1785px;top:74px;width:132px;height:20px;border:1px solid #707070;border-radius:3px;background:linear-gradient(180deg,#f2f2f2 0%,#ebebeb 48%,#dddddd 52%,#cfcfcf 100%);box-shadow:inset 0 0 0 1px #fcfcfc"></div>
<svg style="left:1904px;top:82px" width="8" height="5" viewBox="0 0 8 5" ><path d="M0 0h8L4 4.5z" fill="#000"/></svg>
<div class="a " style="left:0px;top:104px;width:278px;height:22px;background:#dcdcdc;border:1px solid #b9b9b9"></div>
<svg style="left:5px;top:107px" width="16" height="16" viewBox="0 0 16 16" ><g><rect x="0.5" y="0.5" width="15" height="15" fill="#fff" stroke="#3f6fe0"/><rect x="1" y="1" width="14" height="2" fill="#4f8ff0"/><rect x="1" y="1" width="7" height="2" fill="#6fd0ff"/><text x="6" y="12.5" font-family="Liberation Serif" font-style="italic" font-size="12.5" fill="#000" stroke="#000" stroke-width=".35">f</text></g></svg>
<div class="t " style="left:25px;top:110px;font-size:10.9px;letter-spacing:-0.1px">Functions window</div>
<svg style="left:237px;top:110px" width="9" height="9" viewBox="0 0 9 9" ><rect x="2.5" y="0.5" width="6" height="5" fill="none" stroke="#111"/><rect x="2.5" y="0.5" width="6" height="1.6" fill="#111"/><rect x="0.5" y="3.5" width="6" height="5" fill="#dadada" stroke="#111"/><rect x="0.5" y="3.5" width="6" height="1.6" fill="#111"/></svg>
<svg style="left:260px;top:111px" width="8" height="8" viewBox="0 0 8 8" ><path d="M0.7 0.5l7 6.400M7.700 0.5l-7 6.400" stroke="#000" stroke-width="1.6"/></svg>
<div class="a " style="left:0px;top:128px;width:278px;height:587px;background:#fff;border:1px solid #828790"></div>
<div class="a " style="left:1px;top:129px;width:260px;height:17px;background:linear-gradient(180deg,#ffffff 0%,#ffffff 45%,#f3f4f6 55%,#f0f1f3 100%);border-bottom:1px solid #d5d5d5"></div>
<div class="a " style="left:4px;top:129px;width:1px;height:16px;background:#e3e4e6"></div>
<div class="a " style="left:218px;top:129px;width:1px;height:16px;background:#e3e4e6"></div>
<div class="a " style="left:255px;top:129px;width:1px;height:16px;background:#e3e4e6"></div>
<div class="t " style="left:9px;top:132px;font-size:12px;letter-spacing:.04px">Function name</div>
<div class="t " style="left:223px;top:132px;font-size:12px;letter-spacing:-.35px">Segm</div>
<div class="a" style="left:0;top:147px;width:261px;height:550px;overflow:hidden"><div class="a " style="left:5px;top:0px;width:255px;height:17px;background:#e0ffff"></div>
<svg style="left:8px;top:0px" width="16" height="16" viewBox="0 0 16 16" ><g><rect x="0.5" y="0.5" width="15" height="15" fill="#fff" stroke="#3f6fe0"/><rect x="1" y="1" width="14" height="2" fill="#4f8ff0"/><rect x="1" y="1" width="7" height="2" fill="#6fd0ff"/><text x="6" y="12.5" font-family="Liberation Serif" font-style="italic" font-size="12.5" fill="#000" stroke="#000" stroke-width=".35">f</text></g></svg>
<div class="t " style="left:30px;top:3px;font-size:12px;color:#000;letter-spacing:-0.114px">KeQuerySystemTime</div>
<div class="t " style="left:222px;top:3px;font-size:12px;color:#000">.text</div>
<div class="a" style="left:258px;top:0px;width:2px;height:17px;overflow:hidden"><div class="t" style="left:1px;top:3px;font-size:12px;color:#a0522d">8</div></div>
<div class="a " style="left:1px;top:16px;width:4px;height:1px;background:#ececec"></div>
<div class="a " style="left:5px;top:17px;width:255px;height:17px;background:#e0ffff"></div>
<svg style="left:8px;top:17px" width="16" height="16" viewBox="0 0 16 16" ><g><rect x="0.5" y="0.5" width="15" height="15" fill="#fff" stroke="#3f6fe0"/><rect x="1" y="1" width="14" height="2" fill="#4f8ff0"/><rect x="1" y="1" width="7" height="2" fill="#6fd0ff"/><text x="6" y="12.5" font-family="Liberation Serif" font-style="italic" font-size="12.5" fill="#000" stroke="#000" stroke-width=".35">f</text></g></svg>
<div class="t " style="left:30px;top:20px;font-size:12px;color:#000;letter-spacing:0.153px">NtQueryInformationFile</div>
<div class="t " style="left:222px;top:20px;font-size:12px;color:#000">.text</div>
<div class="a" style="left:258px;top:17px;width:2px;height:17px;overflow:hidden"><div class="t" style="left:1px;top:3px;font-size:12px;color:#a0522d">8</div></div>
<div class="a " style="left:1px;top:33px;width:4px;height:1px;background:#ececec"></div>
<div class="a " style="left:5px;top:34px;width:255px;height:17px;background:#e0ffff"></div>
<svg style="left:8px;top:34px" width="16" height="16" viewBox="0 0 16 16" ><g><rect x="0.5" y="0.5" width="15" height="15" fill="#fff" stroke="#3f6fe0"/><rect x="1" y="1" width="14" height="2" fill="#4f8ff0"/><rect x="1" y="1" width="7" height="2" fill="#6fd0ff"/><text x="6" y="12.5" font-family="Liberation Serif" font-style="italic" font-size="12.5" fill="#000" stroke="#000" stroke-width=".35">f</text></g></svg>
<div class="t " style="left:30px;top:37px;font-size:12px;color:#000;letter-spacing:0.137px">NtQueryVolumeInformationFile</div>
<div class="t " style="left:222px;top:37px;font-size:12px;color:#000">.text</div>
<div class="a" style="left:258px;top:34px;width:2px;height:17px;overflow:hidden"><div class="t" style="left:1px;top:3px;font-size:12px;color:#a0522d">8</div></div>
<div class="a " style="left:1px;top:50px;width:4px;height:1px;background:#ececec"></div>
<div class="a " style="left:5px;top:51px;width:255px;height:17px;background:#e0ffff"></div>
<svg style="left:8px;top:51px" width="16" height="16" viewBox="0 0 16 16" ><g><rect x="0.5" y="0.5" width="15" height="15" fill="#fff" stroke="#3f6fe0"/><rect x="1" y="1" width="14" height="2" fill="#4f8ff0"/><rect x="1" y="1" width="7" height="2" fill="#6fd0ff"/><text x="6" y="12.5" font-family="Liberation Serif" font-style="italic" font-size="12.5" fill="#000" stroke="#000" stroke-width=".35">f</text></g></svg>
<div class="t " style="left:30px;top:54px;font-size:12px;color:#000;letter-spacing:-0.262px">NtReadFile</div>
<div class="t " style="left:222px;top:54px;font-size:12px;color:#000">.text</div>
<div class="a" style="left:258px;top:51px;width:2px;height:17px;overflow:hidden"><div class="t" style="left:1px;top:3px;font-size:12px;color:#a0522d">8</div></div>
<div class="a " style="left:1px;top:67px;width:4px;height:1px;background:#ececec"></div>
<div class="a " style="left:5px;top:68px;width:255px;height:17px;background:#e0ffff"></div>
<svg style="left:8px;top:68px" width="16" height="16" viewBox="0 0 16 16" ><g><rect x="0.5" y="0.5" width="15" height="15" fill="#fff" stroke="#3f6fe0"/><rect x="1" y="1" width="14" height="2" fill="#4f8ff0"/><rect x="1" y="1" width="7" height="2" fill="#6fd0ff"/><text x="6" y="12.5" font-family="Liberation Serif" font-style="italic" font-size="12.5" fill="#000" stroke="#000" stroke-width=".35">f</text></g></svg>
<div class="t " style="left:30px;top:71px;font-size:12px;color:#000;letter-spacing:0.049px">NtWriteFile</div>
<div class="t " style="left:222px;top:71px;font-size:12px;color:#000">.text</div>
<div class="a" style="left:258px;top:68px;width:2px;height:17px;overflow:hidden"><div class="t" style="left:1px;top:3px;font-size:12px;color:#a0522d">8</div></div>
<div class="a " style="left:1px;top:84px;width:4px;height:1px;background:#ececec"></div>
<div class="a " style="left:5px;top:85px;width:255px;height:17px;background:#e0ffff"></div>
<svg style="left:8px;top:85px" width="16" height="16" viewBox="0 0 16 16" ><g><rect x="0.5" y="0.5" width="15" height="15" fill="#fff" stroke="#3f6fe0"/><rect x="1" y="1" width="14" height="2" fill="#4f8ff0"/><rect x="1" y="1" width="7" height="2" fill="#6fd0ff"/><text x="6" y="12.5" font-family="Liberation Serif" font-style="italic" font-size="12.5" fill="#000" stroke="#000" stroke-width=".35">f</text></g></svg>
<div class="t " style="left:30px;top:88px;font-size:12px;color:#000;letter-spacing:-0.172px">NtWaitForSingleObjectEx</div>
<div class="t " style="left:222px;top:88px;font-size:12px;color:#000">.text</div>
<div class="a" style="left:258px;top:85px;width:2px;height:17px;overflow:hidden"><div class="t" style="left:1px;top:3px;font-size:12px;color:#a0522d">8</div></div>
<div class="a " style="left:1px;top:101px;width:4px;height:1px;background:#ececec"></div>
<div class="a " style="left:5px;top:102px;width:255px;height:17px;background:#e0ffff"></div>
<svg style="left:8px;top:102px" width="16" height="16" viewBox="0 0 16 16" ><g><rect x="0.5" y="0.5" width="15" height="15" fill="#fff" stroke="#3f6fe0"/><rect x="1" y="1" width="14" height="2" fill="#4f8ff0"/><rect x="1" y="1" width="7" height="2" fill="#6fd0ff"/><text x="6" y="12.5" font-family="Liberation Serif" font-style="italic" font-size="12.5" fill="#000" stroke="#000" stroke-width=".35">f</text></g></svg>
<div class="t " style="left:30px;top:105px;font-size:12px;color:#000;letter-spacing:-0.04px">NtClose</div>
<div class="t " style="left:222px;top:105px;font-size:12px;color:#000">.text</div>
<div class="a" style="left:258px;top:102px;width:2px;height:17px;overflow:hidden"><div class="t" style="left:1px;top:3px;font-size:12px;color:#a0522d">8</div></div>
<div class="a " style="left:1px;top:118px;width:4px;height:1px;background:#ececec"></div>
<div class="a " style="left:5px;top:119px;width:255px;height:17px;background:#e0ffff"></div>
<svg style="left:8px;top:119px" width="16" height="16" viewBox="0 0 16 16" ><g><rect x="0.5" y="0.5" width="15" height="15" fill="#fff" stroke="#3f6fe0"/><rect x="1" y="1" width="14" height="2" fill="#4f8ff0"/><rect x="1" y="1" width="7" height="2" fill="#6fd0ff"/><text x="6" y="12.5" font-family="Liberation Serif" font-style="italic" font-size="12.5" fill="#000" stroke="#000" stroke-width=".35">f</text></g></svg>
<div class="t " style="left:30px;top:122px;font-size:12px;color:#000;letter-spacing:0.051px">NtSetInformationFile</div>
<div class="t " style="left:222px;top:122px;font-size:12px;color:#000">.text</div>
<div class="a" style="left:258px;top:119px;width:2px;height:17px;overflow:hidden"><div class="t" style="left:1px;top:3px;font-size:12px;color:#a0522d">8</div></div>
<div class="a " style="left:1px;top:135px;width:4px;height:1px;background:#ececec"></div>
<div class="a " style="left:5px;top:136px;width:255px;height:17px;background:#e0ffff"></div>
<svg style="left:8px;top:136px" width="16" height="16" viewBox="0 0 16 16" ><g><rect x="0.5" y="0.5" width="15" height="15" fill="#fff" stroke="#3f6fe0"/><rect x="1" y="1" width="14" height="2" fill="#4f8ff0"/><rect x="1" y="1" width="7" height="2" fill="#6fd0ff"/><text x="6" y="12.5" font-family="Liberation Serif" font-style="italic" font-size="12.5" fill="#000" stroke="#000" stroke-width=".35">f</text></g></svg>
<div class="t " style="left:30px;top:139px;font-size:12px;color:#000;letter-spacing:0.054px">NtQueryFullAttributesFile</div>
<div class="t " style="left:222px;top:139px;font-size:12px;color:#000">.text</div>
<div class="a" style="left:258px;top:136px;width:2px;height:17px;overflow:hidden"><div class="t" style="left:1px;top:3px;font-size:12px;color:#a0522d">8</div></div>
<div class="a " style="left:1px;top:152px;width:4px;height:1px;background:#ececec"></div>
<div class="a " style="left:5px;top:153px;width:255px;height:17px;background:#e0ffff"></div>
<svg style="left:8px;top:153px" width="16" height="16" viewBox="0 0 16 16" ><g><rect x="0.5" y="0.5" width="15" height="15" fill="#fff" stroke="#3f6fe0"/><rect x="1" y="1" width="14" height="2" fill="#4f8ff0"/><rect x="1" y="1" width="7" height="2" fill="#6fd0ff"/><text x="6" y="12.5" font-family="Liberation Serif" font-style="italic" font-size="12.5" fill="#000" stroke="#000" stroke-width=".35">f</text></g></svg>
<div class="t " style="left:30px;top:156px;font-size:12px;color:#000;letter-spacing:-0.269px">RtlImageXexHeaderField</div>
<div class="t " style="left:222px;top:156px;font-size:12px;color:#000">.text</div>
<div class="a" style="left:258px;top:153px;width:2px;height:17px;overflow:hidden"><div class="t" style="left:1px;top:3px;font-size:12px;color:#a0522d">8</div></div>
<div class="a " style="left:1px;top:169px;width:4px;height:1px;background:#ececec"></div>
<div class="a " style="left:5px;top:170px;width:255px;height:17px;background:#e0ffff"></div>
<svg style="left:8px;top:170px" width="16" height="16" viewBox="0 0 16 16" ><g><rect x="0.5" y="0.5" width="15" height="15" fill="#fff" stroke="#3f6fe0"/><rect x="1" y="1" width="14" height="2" fill="#4f8ff0"/><rect x="1" y="1" width="7" height="2" fill="#6fd0ff"/><text x="6" y="12.5" font-family="Liberation Serif" font-style="italic" font-size="12.5" fill="#000" stroke="#000" stroke-width=".35">f</text></g></svg>
<div class="t " style="left:30px;top:173px;font-size:12px;color:#000;letter-spacing:0.084px">NtFreeVirtualMemory</div>
<div class="t " style="left:222px;top:173px;font-size:12px;color:#000">.text</div>
<div class="a" style="left:258px;top:170px;width:2px;height:17px;overflow:hidden"><div class="t" style="left:1px;top:3px;font-size:12px;color:#a0522d">8</div></div>
<div class="a " style="left:1px;top:186px;width:4px;height:1px;background:#ececec"></div>
<div class="a " style="left:5px;top:187px;width:255px;height:17px;background:#e0ffff"></div>
<svg style="left:8px;top:187px" width="16" height="16" viewBox="0 0 16 16" ><g><rect x="0.5" y="0.5" width="15" height="15" fill="#fff" stroke="#3f6fe0"/><rect x="1" y="1" width="14" height="2" fill="#4f8ff0"/><rect x="1" y="1" width="7" height="2" fill="#6fd0ff"/><text x="6" y="12.5" font-family="Liberation Serif" font-style="italic" font-size="12.5" fill="#000" stroke="#000" stroke-width=".35">f</text></g></svg>
<div class="t " style="left:30px;top:190px;font-size:12px;color:#000;letter-spacing:-0.102px">NtFlushBuffersFile</div>
<div class="t " style="left:222px;top:190px;font-size:12px;color:#000">.text</div>
<div class="a" style="left:258px;top:187px;width:2px;height:17px;overflow:hidden"><div class="t" style="left:1px;top:3px;font-size:12px;color:#a0522d">8</div></div>
<div class="a " style="left:1px;top:203px;width:4px;height:1px;background:#ececec"></div>
<div class="a " style="left:5px;top:204px;width:255px;height:17px;background:#e0ffff"></div>
<svg style="left:8px;top:204px" width="16" height="16" viewBox="0 0 16 16" ><g><rect x="0.5" y="0.5" width="15" height="15" fill="#fff" stroke="#3f6fe0"/><rect x="1" y="1" width="14" height="2" fill="#4f8ff0"/><rect x="1" y="1" width="7" height="2" fill="#6fd0ff"/><text x="6" y="12.5" font-family="Liberation Serif" font-style="italic" font-size="12.5" fill="#000" stroke="#000" stroke-width=".35">f</text></g></svg>
<div class="t " style="left:30px;top:207px;font-size:12px;color:#000;letter-spacing:0.199px">NtAllocateVirtualMemory</div>
<div class="t " style="left:222px;top:207px;font-size:12px;color:#000">.text</div>
<div class="a" style="left:258px;top:204px;width:2px;height:17px;overflow:hidden"><div class="t" style="left:1px;top:3px;font-size:12px;color:#a0522d">8</div></div>
<div class="a " style="left:1px;top:220px;width:4px;height:1px;background:#ececec"></div>
<div class="a " style="left:5px;top:221px;width:255px;height:17px;background:#e0ffff"></div>
<svg style="left:8px;top:221px" width="16" height="16" viewBox="0 0 16 16" ><g><rect x="0.5" y="0.5" width="15" height="15" fill="#fff" stroke="#3f6fe0"/><rect x="1" y="1" width="14" height="2" fill="#4f8ff0"/><rect x="1" y="1" width="7" height="2" fill="#6fd0ff"/><text x="6" y="12.5" font-family="Liberation Serif" font-style="italic" font-size="12.5" fill="#000" stroke="#000" stroke-width=".35">f</text></g></svg>
<div class="t " style="left:30px;top:224px;font-size:12px;color:#000;letter-spacing:-0.255px">ExAllocatePool</div>
<div class="t " style="left:222px;top:224px;font-size:12px;color:#000">.text</div>
<div class="a" style="left:258px;top:221px;width:2px;height:17px;overflow:hidden"><div class="t" style="left:1px;top:3px;font-size:12px;color:#a0522d">8</div></div>
<div class="a " style="left:1px;top:237px;width:4px;height:1px;background:#ececec"></div>
<div class="a " style="left:5px;top:238px;width:255px;height:17px;background:#e0ffff"></div>
<svg style="left:8px;top:238px" width="16" height="16" viewBox="0 0 16 16" ><g><rect x="0.5" y="0.5" width="15" height="15" fill="#fff" stroke="#3f6fe0"/><rect x="1" y="1" width="14" height="2" fill="#4f8ff0"/><rect x="1" y="1" width="7" height="2" fill="#6fd0ff"/><text x="6" y="12.5" font-family="Liberation Serif" font-style="italic" font-size="12.5" fill="#000" stroke="#000" stroke-width=".35">f</text></g></svg>
<div class="t " style="left:30px;top:241px;font-size:12px;color:#000;letter-spacing:-0.45px">KeBugCheckEx</div>
<div class="t " style="left:222px;top:241px;font-size:12px;color:#000">.text</div>
<div class="a" style="left:258px;top:238px;width:2px;height:17px;overflow:hidden"><div class="t" style="left:1px;top:3px;font-size:12px;color:#a0522d">8</div></div>
<div class="a " style="left:1px;top:254px;width:4px;height:1px;background:#ececec"></div>
<div class="a " style="left:5px;top:255px;width:255px;height:17px;background:#e0ffff"></div>
<svg style="left:8px;top:255px" width="16" height="16" viewBox="0 0 16 16" ><g><rect x="0.5" y="0.5" width="15" height="15" fill="#fff" stroke="#3f6fe0"/><rect x="1" y="1" width="14" height="2" fill="#4f8ff0"/><rect x="1" y="1" width="7" height="2" fill="#6fd0ff"/><text x="6" y="12.5" font-family="Liberation Serif" font-style="italic" font-size="12.5" fill="#000" stroke="#000" stroke-width=".35">f</text></g></svg>
<div class="t " style="left:30px;top:258px;font-size:12px;color:#000;letter-spacing:0.104px">RtlCompareMemoryUlong</div>
<div class="t " style="left:222px;top:258px;font-size:12px;color:#000">.text</div>
<div class="a" style="left:258px;top:255px;width:2px;height:17px;overflow:hidden"><div class="t" style="left:1px;top:3px;font-size:12px;color:#a0522d">8</div></div>
<div class="a " style="left:1px;top:271px;width:4px;height:1px;background:#ececec"></div>
<div class="a " style="left:5px;top:272px;width:255px;height:17px;background:#e0ffff"></div>
<svg style="left:8px;top:272px" width="16" height="16" viewBox="0 0 16 16" ><g><rect x="0.5" y="0.5" width="15" height="15" fill="#fff" stroke="#3f6fe0"/><rect x="1" y="1" width="14" height="2" fill="#4f8ff0"/><rect x="1" y="1" width="7" height="2" fill="#6fd0ff"/><text x="6" y="12.5" font-family="Liberation Serif" font-style="italic" font-size="12.5" fill="#000" stroke="#000" stroke-width=".35">f</text></g></svg>
<div class="t " style="left:30px;top:275px;font-size:12px;color:#000;letter-spacing:0.229px">NtQueryVirtualMemory</div>
<div class="t " style="left:222px;top:275px;font-size:12px;color:#000">.text</div>
<div class="a" style="left:258px;top:272px;width:2px;height:17px;overflow:hidden"><div class="t" style="left:1px;top:3px;font-size:12px;color:#a0522d">8</div></div>
<div class="a " style="left:1px;top:288px;width:4px;height:1px;background:#ececec"></div>
<div class="a " style="left:5px;top:289px;width:255px;height:17px;background:#e0ffff"></div>
<svg style="left:8px;top:289px" width="16" height="16" viewBox="0 0 16 16" ><g><rect x="0.5" y="0.5" width="15" height="15" fill="#fff" stroke="#3f6fe0"/><rect x="1" y="1" width="14" height="2" fill="#4f8ff0"/><rect x="1" y="1" width="7" height="2" fill="#6fd0ff"/><text x="6" y="12.5" font-family="Liberation Serif" font-style="italic" font-size="12.5" fill="#000" stroke="#000" stroke-width=".35">f</text></g></svg>
<div class="t " style="left:30px;top:292px;font-size:12px;color:#000;letter-spacing:-0.347px">RtlRaiseException</div>
<div class="t " style="left:222px;top:292px;font-size:12px;color:#000">.text</div>
<div class="a" style="left:258px;top:289px;width:2px;height:17px;overflow:hidden"><div class="t" style="left:1px;top:3px;font-size:12px;color:#a0522d">8</div></div>
<div class="a " style="left:1px;top:305px;width:4px;height:1px;background:#ececec"></div>
<div class="a " style="left:5px;top:306px;width:255px;height:17px;background:#e0ffff"></div>
<svg style="left:8px;top:306px" width="16" height="16" viewBox="0 0 16 16" ><g><rect x="0.5" y="0.5" width="15" height="15" fill="#fff" stroke="#3f6fe0"/><rect x="1" y="1" width="14" height="2" fill="#4f8ff0"/><rect x="1" y="1" width="7" height="2" fill="#6fd0ff"/><text x="6" y="12.5" font-family="Liberation Serif" font-style="italic" font-size="12.5" fill="#000" stroke="#000" stroke-width=".35">f</text></g></svg>
<div class="t " style="left:30px;top:309px;font-size:12px;color:#000;letter-spacing:-0.177px">NtCreateEvent</div>
<div class="t " style="left:222px;top:309px;font-size:12px;color:#000">.text</div>
<div class="a" style="left:258px;top:306px;width:2px;height:17px;overflow:hidden"><div class="t" style="left:1px;top:3px;font-size:12px;color:#a0522d">8</div></div>
<div class="a " style="left:1px;top:322px;width:4px;height:1px;background:#ececec"></div>
<div class="a " style="left:5px;top:323px;width:255px;height:17px;background:#e0ffff"></div>
<svg style="left:8px;top:323px" width="16" height="16" viewBox="0 0 16 16" ><g><rect x="0.5" y="0.5" width="15" height="15" fill="#fff" stroke="#3f6fe0"/><rect x="1" y="1" width="14" height="2" fill="#4f8ff0"/><rect x="1" y="1" width="7" height="2" fill="#6fd0ff"/><text x="6" y="12.5" font-family="Liberation Serif" font-style="italic" font-size="12.5" fill="#000" stroke="#000" stroke-width=".35">f</text></g></svg>
<div class="t " style="left:30px;top:326px;font-size:12px;color:#000;letter-spacing:-0.23px">NtSetEvent</div>
<div class="t " style="left:222px;top:326px;font-size:12px;color:#000">.text</div>
<div class="a" style="left:258px;top:323px;width:2px;height:17px;overflow:hidden"><div class="t" style="left:1px;top:3px;font-size:12px;color:#a0522d">8</div></div>
<div class="a " style="left:1px;top:339px;width:4px;height:1px;background:#ececec"></div>
<div class="a " style="left:5px;top:340px;width:255px;height:17px;background:#e0ffff"></div>
<svg style="left:8px;top:340px" width="16" height="16" viewBox="0 0 16 16" ><g><rect x="0.5" y="0.5" width="15" height="15" fill="#fff" stroke="#3f6fe0"/><rect x="1" y="1" width="14" height="2" fill="#4f8ff0"/><rect x="1" y="1" width="7" height="2" fill="#6fd0ff"/><text x="6" y="12.5" font-family="Liberation Serif" font-style="italic" font-size="12.5" fill="#000" stroke="#000" stroke-width=".35">f</text></g></svg>
<div class="t " style="left:30px;top:343px;font-size:12px;color:#000;letter-spacing:-0.163px">NtClearEvent</div>
<div class="t " style="left:222px;top:343px;font-size:12px;color:#000">.text</div>
<div class="a" style="left:258px;top:340px;width:2px;height:17px;overflow:hidden"><div class="t" style="left:1px;top:3px;font-size:12px;color:#a0522d">8</div></div>
<div class="a " style="left:1px;top:356px;width:4px;height:1px;background:#ececec"></div>
<div class="a " style="left:5px;top:357px;width:255px;height:17px;background:#e0ffff"></div>
<svg style="left:8px;top:357px" width="16" height="16" viewBox="0 0 16 16" ><g><rect x="0.5" y="0.5" width="15" height="15" fill="#fff" stroke="#3f6fe0"/><rect x="1" y="1" width="14" height="2" fill="#4f8ff0"/><rect x="1" y="1" width="7" height="2" fill="#6fd0ff"/><text x="6" y="12.5" font-family="Liberation Serif" font-style="italic" font-size="12.5" fill="#000" stroke="#000" stroke-width=".35">f</text></g></svg>
<div class="t " style="left:30px;top:360px;font-size:12px;color:#000;letter-spacing:0.099px">NtDuplicateObject</div>
<div class="t " style="left:222px;top:360px;font-size:12px;color:#000">.text</div>
<div class="a" style="left:258px;top:357px;width:2px;height:17px;overflow:hidden"><div class="t" style="left:1px;top:3px;font-size:12px;color:#a0522d">8</div></div>
<div class="a " style="left:1px;top:373px;width:4px;height:1px;background:#ececec"></div>
<div class="a " style="left:5px;top:374px;width:255px;height:17px;background:#e0ffff"></div>
<svg style="left:8px;top:374px" width="16" height="16" viewBox="0 0 16 16" ><g><rect x="0.5" y="0.5" width="15" height="15" fill="#fff" stroke="#3f6fe0"/><rect x="1" y="1" width="14" height="2" fill="#4f8ff0"/><rect x="1" y="1" width="7" height="2" fill="#6fd0ff"/><text x="6" y="12.5" font-family="Liberation Serif" font-style="italic" font-size="12.5" fill="#000" stroke="#000" stroke-width=".35">f</text></g></svg>
<div class="t " style="left:30px;top:377px;font-size:12px;color:#000;letter-spacing:-0.183px">NtResumeThread</div>
<div class="t " style="left:222px;top:377px;font-size:12px;color:#000">.text</div>
<div class="a" style="left:258px;top:374px;width:2px;height:17px;overflow:hidden"><div class="t" style="left:1px;top:3px;font-size:12px;color:#a0522d">8</div></div>
<div class="a " style="left:1px;top:390px;width:4px;height:1px;background:#ececec"></div>
<div class="a " style="left:5px;top:391px;width:255px;height:17px;background:#e0ffff"></div>
<svg style="left:8px;top:391px" width="16" height="16" viewBox="0 0 16 16" ><g><rect x="0.5" y="0.5" width="15" height="15" fill="#fff" stroke="#3f6fe0"/><rect x="1" y="1" width="14" height="2" fill="#4f8ff0"/><rect x="1" y="1" width="7" height="2" fill="#6fd0ff"/><text x="6" y="12.5" font-family="Liberation Serif" font-style="italic" font-size="12.5" fill="#000" stroke="#000" stroke-width=".35">f</text></g></svg>
<div class="t " style="left:30px;top:394px;font-size:12px;color:#000;letter-spacing:0.024px">RtlUnicodeToMultiByteN</div>
<div class="t " style="left:222px;top:394px;font-size:12px;color:#000">.text</div>
<div class="a" style="left:258px;top:391px;width:2px;height:17px;overflow:hidden"><div class="t" style="left:1px;top:3px;font-size:12px;color:#a0522d">8</div></div>
<div class="a " style="left:1px;top:407px;width:4px;height:1px;background:#ececec"></div>
<div class="a " style="left:5px;top:408px;width:255px;height:17px;background:#e0ffff"></div>
<svg style="left:8px;top:408px" width="16" height="16" viewBox="0 0 16 16" ><g><rect x="0.5" y="0.5" width="15" height="15" fill="#fff" stroke="#3f6fe0"/><rect x="1" y="1" width="14" height="2" fill="#4f8ff0"/><rect x="1" y="1" width="7" height="2" fill="#6fd0ff"/><text x="6" y="12.5" font-family="Liberation Serif" font-style="italic" font-size="12.5" fill="#000" stroke="#000" stroke-width=".35">f</text></g></svg>
<div class="t " style="left:30px;top:411px;font-size:12px;color:#000;letter-spacing:0.064px">NtCancelTimer</div>
<div class="t " style="left:222px;top:411px;font-size:12px;color:#000">.text</div>
<div class="a" style="left:258px;top:408px;width:2px;height:17px;overflow:hidden"><div class="t" style="left:1px;top:3px;font-size:12px;color:#a0522d">8</div></div>
<div class="a " style="left:1px;top:424px;width:4px;height:1px;background:#ececec"></div>
<div class="a " style="left:5px;top:425px;width:255px;height:17px;background:#e0ffff"></div>
<svg style="left:8px;top:425px" width="16" height="16" viewBox="0 0 16 16" ><g><rect x="0.5" y="0.5" width="15" height="15" fill="#fff" stroke="#3f6fe0"/><rect x="1" y="1" width="14" height="2" fill="#4f8ff0"/><rect x="1" y="1" width="7" height="2" fill="#6fd0ff"/><text x="6" y="12.5" font-family="Liberation Serif" font-style="italic" font-size="12.5" fill="#000" stroke="#000" stroke-width=".35">f</text></g></svg>
<div class="t " style="left:30px;top:428px;font-size:12px;color:#000;letter-spacing:-0.215px">NtSetTimerEx</div>
<div class="t " style="left:222px;top:428px;font-size:12px;color:#000">.text</div>
<div class="a" style="left:258px;top:425px;width:2px;height:17px;overflow:hidden"><div class="t" style="left:1px;top:3px;font-size:12px;color:#a0522d">8</div></div>
<div class="a " style="left:1px;top:441px;width:4px;height:1px;background:#ececec"></div>
<div class="a " style="left:5px;top:442px;width:255px;height:17px;background:#e0ffff"></div>
<svg style="left:8px;top:442px" width="16" height="16" viewBox="0 0 16 16" ><g><rect x="0.5" y="0.5" width="15" height="15" fill="#fff" stroke="#3f6fe0"/><rect x="1" y="1" width="14" height="2" fill="#4f8ff0"/><rect x="1" y="1" width="7" height="2" fill="#6fd0ff"/><text x="6" y="12.5" font-family="Liberation Serif" font-style="italic" font-size="12.5" fill="#000" stroke="#000" stroke-width=".35">f</text></g></svg>
<div class="t " style="left:30px;top:445px;font-size:12px;color:#000;letter-spacing:-0.268px">ExTerminateThread</div>
<div class="t " style="left:222px;top:445px;font-size:12px;color:#000">.text</div>
<div class="a" style="left:258px;top:442px;width:2px;height:17px;overflow:hidden"><div class="t" style="left:1px;top:3px;font-size:12px;color:#a0522d">8</div></div>
<div class="a " style="left:1px;top:458px;width:4px;height:1px;background:#ececec"></div>
<div class="a " style="left:5px;top:459px;width:255px;height:17px;background:#e0ffff"></div>
<svg style="left:8px;top:459px" width="16" height="16" viewBox="0 0 16 16" ><g><rect x="0.5" y="0.5" width="15" height="15" fill="#fff" stroke="#3f6fe0"/><rect x="1" y="1" width="14" height="2" fill="#4f8ff0"/><rect x="1" y="1" width="7" height="2" fill="#6fd0ff"/><text x="6" y="12.5" font-family="Liberation Serif" font-style="italic" font-size="12.5" fill="#000" stroke="#000" stroke-width=".35">f</text></g></svg>
<div class="t " style="left:30px;top:462px;font-size:12px;color:#000;letter-spacing:0.013px">NtCreateTimer</div>
<div class="t " style="left:222px;top:462px;font-size:12px;color:#000">.text</div>
<div class="a" style="left:258px;top:459px;width:2px;height:17px;overflow:hidden"><div class="t" style="left:1px;top:3px;font-size:12px;color:#a0522d">8</div></div>
<div class="a " style="left:1px;top:475px;width:4px;height:1px;background:#ececec"></div>
<div class="a " style="left:5px;top:476px;width:255px;height:17px;background:#e0ffff"></div>
<svg style="left:8px;top:476px" width="16" height="16" viewBox="0 0 16 16" ><g><rect x="0.5" y="0.5" width="15" height="15" fill="#fff" stroke="#3f6fe0"/><rect x="1" y="1" width="14" height="2" fill="#4f8ff0"/><rect x="1" y="1" width="7" height="2" fill="#6fd0ff"/><text x="6" y="12.5" font-family="Liberation Serif" font-style="italic" font-size="12.5" fill="#000" stroke="#000" stroke-width=".35">f</text></g></svg>
<div class="t " style="left:30px;top:479px;font-size:12px;color:#000;letter-spacing:0.024px">RtlMultiByteToUnicodeN</div>
<div class="t " style="left:222px;top:479px;font-size:12px;color:#000">.text</div>
<div class="a" style="left:258px;top:476px;width:2px;height:17px;overflow:hidden"><div class="t" style="left:1px;top:3px;font-size:12px;color:#a0522d">8</div></div>
<div class="a " style="left:1px;top:492px;width:4px;height:1px;background:#ececec"></div>
<div class="a " style="left:5px;top:493px;width:255px;height:17px;background:#e0ffff"></div>
<svg style="left:8px;top:493px" width="16" height="16" viewBox="0 0 16 16" ><g><rect x="0.5" y="0.5" width="15" height="15" fill="#fff" stroke="#3f6fe0"/><rect x="1" y="1" width="14" height="2" fill="#4f8ff0"/><rect x="1" y="1" width="7" height="2" fill="#6fd0ff"/><text x="6" y="12.5" font-family="Liberation Serif" font-style="italic" font-size="12.5" fill="#000" stroke="#000" stroke-width=".35">f</text></g></svg>
<div class="t " style="left:30px;top:496px;font-size:12px;color:#000;letter-spacing:-0.228px">RtlFreeAnsiString</div>
<div class="t " style="left:222px;top:496px;font-size:12px;color:#000">.text</div>
<div class="a" style="left:258px;top:493px;width:2px;height:17px;overflow:hidden"><div class="t" style="left:1px;top:3px;font-size:12px;color:#a0522d">8</div></div>
<div class="a " style="left:1px;top:509px;width:4px;height:1px;background:#ececec"></div>
<div class="a " style="left:5px;top:510px;width:255px;height:17px;background:#e0ffff"></div>
<svg style="left:8px;top:510px" width="16" height="16" viewBox="0 0 16 16" ><g><rect x="0.5" y="0.5" width="15" height="15" fill="#fff" stroke="#3f6fe0"/><rect x="1" y="1" width="14" height="2" fill="#4f8ff0"/><rect x="1" y="1" width="7" height="2" fill="#6fd0ff"/><text x="6" y="12.5" font-family="Liberation Serif" font-style="italic" font-size="12.5" fill="#000" stroke="#000" stroke-width=".35">f</text></g></svg>
<div class="t " style="left:30px;top:513px;font-size:12px;color:#000;letter-spacing:-0.09px">RtlUnicodeStringToAnsiString</div>
<div class="t " style="left:222px;top:513px;font-size:12px;color:#000">.text</div>
<div class="a" style="left:258px;top:510px;width:2px;height:17px;overflow:hidden"><div class="t" style="left:1px;top:3px;font-size:12px;color:#a0522d">8</div></div>
<div class="a " style="left:1px;top:526px;width:4px;height:1px;background:#ececec"></div>
<div class="a " style="left:5px;top:527px;width:255px;height:17px;background:#e0ffff"></div>
<svg style="left:8px;top:527px" width="16" height="16" viewBox="0 0 16 16" ><g><rect x="0.5" y="0.5" width="15" height="15" fill="#fff" stroke="#3f6fe0"/><rect x="1" y="1" width="14" height="2" fill="#4f8ff0"/><rect x="1" y="1" width="7" height="2" fill="#6fd0ff"/><text x="6" y="12.5" font-family="Liberation Serif" font-style="italic" font-size="12.5" fill="#000" stroke="#000" stroke-width=".35">f</text></g></svg>
<div class="t " style="left:30px;top:530px;font-size:12px;color:#000;letter-spacing:-0.007px">RtlInitUnicodeString</div>
<div class="t " style="left:222px;top:530px;font-size:12px;color:#000">.text</div>
<div class="a" style="left:258px;top:527px;width:2px;height:17px;overflow:hidden"><div class="t" style="left:1px;top:3px;font-size:12px;color:#a0522d">8</div></div>
<div class="a " style="left:1px;top:543px;width:4px;height:1px;background:#ececec"></div>
<div class="a " style="left:5px;top:544px;width:255px;height:17px;background:#f0f0f0"></div>
<svg style="left:8px;top:544px" width="16" height="16" viewBox="0 0 16 16" ><g opacity=".55"><rect x="0.5" y="0.5" width="15" height="15" fill="#fff" stroke="#3f6fe0"/><rect x="1" y="1" width="14" height="2" fill="#4f8ff0"/><rect x="1" y="1" width="7" height="2" fill="#6fd0ff"/><text x="6" y="12.5" font-family="Liberation Serif" font-style="italic" font-size="12.5" fill="#000" stroke="#000" stroke-width=".35">f</text></g></svg>
<div class="t " style="left:30px;top:547px;font-size:12px;color:#6a6a6a;letter-spacing:-0.258px">KeDelayExecutionThread</div>
<div class="t " style="left:222px;top:547px;font-size:12px;color:#6a6a6a">.text</div>
<div class="a" style="left:258px;top:544px;width:2px;height:17px;overflow:hidden"><div class="t" style="left:1px;top:3px;font-size:12px;color:#a0522d">8</div></div>
<div class="a " style="left:1px;top:560px;width:4px;height:1px;background:#ececec"></div></div>
<div class="a " style="left:261px;top:129px;width:16px;height:568px;background:linear-gradient(90deg,#e3e3e3 0%,#ededed 30%,#f0f0f0 100%)"></div>
<svg style="left:266px;top:136px" width="7" height="4" viewBox="0 0 7 4" ><path d="M0 4L3.5 0 7 4z" fill="#505050"/></svg>
<svg style="left:266px;top:686px" width="7" height="4" viewBox="0 0 7 4" ><path d="M0 0L3.5 4 7 0z" fill="#505050"/></svg>
<div class="a " style="left:262px;top:660px;width:14px;height:16px;border:1px solid #979797;border-radius:2px;background:linear-gradient(90deg,#f4f4f4 0%,#e9e9e9 45%,#d4d4d4 55%,#dcdcdc 100%)"></div>
<div class="a " style="left:1px;top:697px;width:260px;height:17px;background:linear-gradient(180deg,#e3e3e3 0%,#ededed 30%,#f0f0f0 100%)"></div>
<svg style="left:7px;top:702px" width="4" height="7" viewBox="0 0 4 7" ><path d="M4 0L0 3.5 4 7z" fill="#404040"/></svg>
<svg style="left:249px;top:702px" width="4" height="7" viewBox="0 0 4 7" ><path d="M0 0L4 3.5 0 7z" fill="#404040"/></svg>
<div class="a " style="left:19px;top:698px;width:141px;height:15px;border:1px solid #979797;border-radius:2px;background:linear-gradient(180deg,#f4f4f4 0%,#e9e9e9 45%,#d4d4d4 55%,#dcdcdc 100%)"></div>
<svg style="left:85px;top:702px" width="8" height="7" viewBox="0 0 8 7" ><path d="M0.5 0v7M3.5 0v7M6.5 0v7" stroke="#5a5a5a" stroke-width="1"/><path d="M1.5 0v7M4.5 0v7M7.5 0v7" stroke="#fff" stroke-width="1"/></svg>
<div class="a " style="left:261px;top:697px;width:16px;height:17px;background:#f0f0f0"></div>
<div class="t " style="left:6px;top:719px;font-size:11.1px;letter-spacing:.03px">Line 12221 of 12296</div>
<div class="a " style="left:0px;top:737px;width:278px;height:22px;background:#dcdcdc;border:1px solid #b9b9b9"></div>
<svg style="left:6px;top:741px" width="16" height="14" viewBox="0 0 16 14" ><g fill="#5a9af0" stroke="#0a3ab0" stroke-width="1"><rect x="5.5" y="0.5" width="4" height="3"/><rect x="2.5" y="5.5" width="4" height="3"/><rect x="8.5" y="5.5" width="4" height="3"/><rect x="0.5" y="10.5" width="2.5" height="3"/><rect x="4.5" y="10.5" width="2.5" height="3"/><rect x="8.5" y="10.5" width="2.5" height="3"/><rect x="12.5" y="10.5" width="2.5" height="3"/></g><path d="M7.5 3.5v2M4.5 5.5v-1h6v1M2 10.5v-1h11.5v1M4.5 8.5v1M10.5 8.5v1M6 9.5v1M10 9.5v1" stroke="#0a3ab0" fill="none"/></svg>
<div class="t " style="left:25px;top:743px;font-size:10.9px;letter-spacing:0.0px">Graph overview</div>
<svg style="left:237px;top:743px" width="9" height="9" viewBox="0 0 9 9" ><rect x="2.5" y="0.5" width="6" height="5" fill="none" stroke="#111"/><rect x="2.5" y="0.5" width="6" height="1.6" fill="#111"/><rect x="0.5" y="3.5" width="6" height="5" fill="#dadada" stroke="#111"/><rect x="0.5" y="3.5" width="6" height="1.6" fill="#111"/></svg>
<svg style="left:260px;top:744px" width="8" height="8" viewBox="0 0 8 8" ><path d="M0.7 0.5l7 6.400M7.700 0.5l-7 6.400" stroke="#000" stroke-width="1.6"/></svg>
<div class="a " style="left:0px;top:760px;width:278px;height:423px;background:#fff"></div>
<svg style="left:0px;top:760px" width="278" height="423" viewBox="0 0 278 423" ><path d="M129.5 70 L129.5 76.5 L96.5 76.5 L96.5 80" fill="none" stroke="#ff0000" stroke-width="1"/><path d="M135.5 70 L135.5 76.5 L166.5 76.5 L166.5 80" fill="none" stroke="#008000" stroke-width="1"/><path d="M97.5 97 L97.5 123.5 L134.5 123.5 L134.5 127" fill="none" stroke="#0000ff" stroke-width="1"/><path d="M167.5 117 L167.5 123.5 L142.5 123.5 L142.5 127" fill="none" stroke="#0000ff" stroke-width="1"/><path d="M135.5 158 L135.5 165 L138.5 165 L138.5 168" fill="none" stroke="#ff0000" stroke-width="1"/><path d="M142.5 158 L142.5 164.5 L183.5 164.5 L183.5 201.5 L143.5 201.5 L143.5 205" fill="none" stroke="#008000" stroke-width="1"/><path d="M138.5 195 L138.5 205" fill="none" stroke="#0000ff" stroke-width="1"/><path d="M140.5 227 L140.5 232 L138.5 232 L138.5 236" fill="none" stroke="#0000ff" stroke-width="1"/><path d="M145 236 L145 232 L205 232 L205 315 L155 315 L155 309" fill="none" stroke="#008000" stroke-width="2"/><path d="M145.5 282 L145.5 288.5 L151.5 288.5 L151.5 293" fill="none" stroke="#ff0000" stroke-width="1"/><path d="M138.5 282 L138.5 288.5 L96.5 288.5 L96.5 315.5 L129.5 315.5 L129.5 319" fill="none" stroke="#008000" stroke-width="1"/><path d="M148.5 309 L148.5 315.5 L135.5 315.5 L135.5 319" fill="none" stroke="#ff0000" stroke-width="1"/><path d="M129.5 351 L129.5 357 L131.5 357 L131.5 360" fill="none" stroke="#ff0000" stroke-width="1"/><path d="M135.5 351 L135.5 356.5 L156.5 356.5 L156.5 378.5 L136.5 378.5 L136.5 383" fill="none" stroke="#008000" stroke-width="1"/><path d="M131.5 373 L131.5 378.5 L130.5 378.5 L130.5 383" fill="none" stroke="#0000ff" stroke-width="1"/><path d="M94.5 77.5h4l-2 3z" fill="#ff0000" stroke="#ff0000" stroke-width="1"/><path d="M164.5 77.5h4l-2 3z" fill="#008000" stroke="#008000" stroke-width="1"/><path d="M132.5 123.5h4l-2 3z" fill="#0000ff" stroke="#0000ff" stroke-width="1"/><path d="M140.5 123.5h4l-2 3z" fill="#0000ff" stroke="#0000ff" stroke-width="1"/><path d="M136.5 165h4l-2 3z" fill="#ff0000" stroke="#ff0000" stroke-width="1"/><path d="M141.5 201.5h4l-2 3z" fill="#008000" stroke="#008000" stroke-width="1"/><path d="M136.5 201.5h4l-2 3z" fill="#0000ff" stroke="#0000ff" stroke-width="1"/><path d="M136.5 233h4l-2 3z" fill="#0000ff" stroke="#0000ff" stroke-width="1"/><path d="M143 233h4l-2 3z" fill="#008000" stroke="#008000" stroke-width="1"/><path d="M149.5 289.5h4l-2 3z" fill="#ff0000" stroke="#ff0000" stroke-width="1"/><path d="M127.5 316h4l-2 3z" fill="#008000" stroke="#008000" stroke-width="1"/><path d="M133.5 316h4l-2 3z" fill="#ff0000" stroke="#ff0000" stroke-width="1"/><path d="M129.5 357h4l-2 3z" fill="#ff0000" stroke="#ff0000" stroke-width="1"/><path d="M134.5 380h4l-2 3z" fill="#008000" stroke="#008000" stroke-width="1"/><path d="M128.5 380h4l-2 3z" fill="#0000ff" stroke="#0000ff" stroke-width="1"/><rect x="99.5" y="1.5" width="65" height="69" fill="#fff" stroke="#000" stroke-width="1"/><rect x="71.5" y="81.5" width="52" height="16" fill="#fff" stroke="#000" stroke-width="1"/><rect x="127.5" y="81.5" width="78" height="36" fill="#fff" stroke="#000" stroke-width="1"/><rect x="105.5" y="127.5" width="66" height="31" fill="#fff" stroke="#000" stroke-width="1"/><rect x="95.5" y="169.5" width="84" height="26" fill="#fff" stroke="#000" stroke-width="1"/><rect x="111.5" y="205.5" width="57" height="22" fill="#fff" stroke="#000" stroke-width="1"/><rect x="95.5" y="237.5" width="91" height="45" fill="#fff" stroke="#000" stroke-width="1"/><rect x="118.5" y="293.5" width="65" height="16" fill="#fff" stroke="#000" stroke-width="1"/><rect x="99.5" y="320.5" width="65" height="31" fill="#fff" stroke="#000" stroke-width="1"/><rect x="109.5" y="361.5" width="43" height="12" fill="#fff" stroke="#000" stroke-width="1"/><rect x="94.5" y="384.5" width="78" height="35" fill="#fff" stroke="#000" stroke-width="1"/><path d="M40.5 0V297.5H260.5V0" fill="none" stroke="#000" stroke-width="1" stroke-dasharray="1 2"/></svg>
<div class="a " style="left:281px;top:103px;width:236px;height:25px;background:#fff;border:1px solid #8e8f8f;border-bottom:none"></div>
<div class="t " style="left:330px;top:110px;font-size:10.9px;letter-spacing:-.08px">IDA View-A, IDA View-B</div>
<svg style="left:487px;top:108px" width="14" height="14" viewBox="0 0 14 14" ><rect x="0.5" y="0.5" width="13" height="13" rx="2.5" fill="#e0734f" stroke="#c84a2f"/><path d="M4 4l6 6M10 4l-6 6" stroke="#fff" stroke-width="2"/></svg>
<div class="a " style="left:517px;top:105px;width:1167px;height:22px;background:linear-gradient(180deg,#fdfdfd 0%,#f3f3f3 25%,#eeeeee 48%,#e0e0e0 52%,#d6d6d6 100%);border-top:1px solid #8a8f9c;border-bottom:1px solid #9c9c9c;border-right:1px solid #8a8f9c"></div>
<div class="a " style="left:748px;top:106px;width:1px;height:20px;background:rgba(255,255,255,.85)"></div>
<div class="a " style="left:749px;top:105px;width:1px;height:22px;background:#858a97"></div>
<div class="a " style="left:750px;top:106px;width:1px;height:20px;background:rgba(255,255,255,.85)"></div>
<div class="a " style="left:982px;top:106px;width:1px;height:20px;background:rgba(255,255,255,.85)"></div>
<div class="a " style="left:983px;top:105px;width:1px;height:22px;background:#858a97"></div>
<div class="a " style="left:984px;top:106px;width:1px;height:20px;background:rgba(255,255,255,.85)"></div>
<div class="a " style="left:1216px;top:106px;width:1px;height:20px;background:rgba(255,255,255,.85)"></div>
<div class="a " style="left:1217px;top:105px;width:1px;height:22px;background:#858a97"></div>
<div class="a " style="left:1218px;top:106px;width:1px;height:20px;background:rgba(255,255,255,.85)"></div>
<div class="a " style="left:1450px;top:106px;width:1px;height:20px;background:rgba(255,255,255,.85)"></div>
<div class="a " style="left:1451px;top:105px;width:1px;height:22px;background:#858a97"></div>
<div class="a " style="left:1452px;top:106px;width:1px;height:20px;background:rgba(255,255,255,.85)"></div>
<div class="t" style="left:515px;top:111px;width:233px;text-align:center;font-size:10.9px;letter-spacing:0px">Hex View-A</div>
<svg style="left:722px;top:109px" width="14" height="14" viewBox="0 0 14 14" ><rect x="0.5" y="0.5" width="13" height="13" rx="2.5" fill="#c9c9c9" stroke="#a8a8a8"/><path d="M4 4l6 6M10 4l-6 6" stroke="#fff" stroke-width="2"/></svg>
<svg style="left:527px;top:107px" width="16" height="16" viewBox="0 0 16 16" ><rect x="0.5" y="0.5" width="15" height="15" fill="#fff" stroke="#3f6fe0"/><rect x="1" y="1" width="14" height="2.5" fill="#4f8ff0"/><circle cx="8" cy="9.5" r="3" fill="none" stroke="#1f3f9a" stroke-width="1.4"/></svg>
<div class="t" style="left:749px;top:111px;width:233px;text-align:center;font-size:10.9px;letter-spacing:0px">Structures</div>
<svg style="left:956px;top:109px" width="14" height="14" viewBox="0 0 14 14" ><rect x="0.5" y="0.5" width="13" height="13" rx="2.5" fill="#c9c9c9" stroke="#a8a8a8"/><path d="M4 4l6 6M10 4l-6 6" stroke="#fff" stroke-width="2"/></svg>
<svg style="left:761px;top:107px" width="16" height="16" viewBox="0 0 16 16" ><rect x="0.5" y="0.5" width="14" height="14" fill="#fff" stroke="#3f6fe0"/><rect x="1" y="1" width="13" height="2" fill="#4f8ff0"/><text x="3.2" y="13" font-family="Liberation Sans" font-weight="bold" font-size="10.5" fill="#1f3f7a">A</text></svg>
<div class="t" style="left:983px;top:111px;width:233px;text-align:center;font-size:10.9px;letter-spacing:0px">Enums</div>
<svg style="left:1190px;top:109px" width="14" height="14" viewBox="0 0 14 14" ><rect x="0.5" y="0.5" width="13" height="13" rx="2.5" fill="#c9c9c9" stroke="#a8a8a8"/><path d="M4 4l6 6M10 4l-6 6" stroke="#fff" stroke-width="2"/></svg>
<svg style="left:995px;top:107px" width="16" height="16" viewBox="0 0 16 16" ><rect x="0.5" y="0.5" width="15" height="14" fill="#fff" stroke="#3f6fe0"/><rect x="1" y="1" width="14" height="2" fill="#4f8ff0"/><path d="M3.5 4v9M3.5 5.5h2M3.5 8.5h2M3.5 11.5h2" stroke="#1f3fc0" fill="none"/><path d="M7 5.5h5M7 8.5h5M7 11.5h5" stroke="#3a3a3a"/></svg>
<div class="t" style="left:1217px;top:111px;width:233px;text-align:center;font-size:10.9px;letter-spacing:0px">Imports</div>
<svg style="left:1424px;top:109px" width="14" height="14" viewBox="0 0 14 14" ><rect x="0.5" y="0.5" width="13" height="13" rx="2.5" fill="#c9c9c9" stroke="#a8a8a8"/><path d="M4 4l6 6M10 4l-6 6" stroke="#fff" stroke-width="2"/></svg>
<svg style="left:1229px;top:107px" width="16" height="16" viewBox="0 0 16 16" ><rect x="3.5" y="0.5" width="11" height="11" fill="#fff" stroke="#3f6fe0"/><rect x="4" y="1" width="10" height="2" fill="#4f8ff0"/><rect x="6.5" y="5.5" width="9" height="10" fill="#fff" stroke="#3f6fe0"/><path d="M8 8h6M8 10h6M8 12h6M8 14h6" stroke="#1f3fc0"/><path d="M1 4l5 3.5-5 3.5z" fill="#1aa51a" stroke="#0a5a0a" stroke-width=".6"/></svg>
<div class="t" style="left:1451px;top:111px;width:233px;text-align:center;font-size:10.9px;letter-spacing:0px">Exports</div>
<svg style="left:1658px;top:109px" width="14" height="14" viewBox="0 0 14 14" ><rect x="0.5" y="0.5" width="13" height="13" rx="2.5" fill="#c9c9c9" stroke="#a8a8a8"/><path d="M4 4l6 6M10 4l-6 6" stroke="#fff" stroke-width="2"/></svg>
<svg style="left:1463px;top:107px" width="16" height="16" viewBox="0 0 16 16" ><rect x="3.5" y="0.5" width="11" height="11" fill="#fff" stroke="#3f6fe0"/><rect x="4" y="1" width="10" height="2" fill="#4f8ff0"/><rect x="0.5" y="4.5" width="9" height="11" fill="#fff" stroke="#3f6fe0"/><path d="M2 7h6M2 9h6M2 11h6M2 13h6" stroke="#1f3fc0"/><path d="M8 9c1-3 3-4 5-4V3l3 3-3 3V7c-2 0-3 0-5 2z" fill="#1aa51a" stroke="#0a5a0a" stroke-width=".6"/></svg>
<div class="a " style="left:506px;top:102px;width:117px;height:17px;background:#ffffe1;border:1px solid #767676"></div>
<div class="t m" style="left:507px;top:104px;color:#0000ff">.text:82392000</div>
<div class="a " style="left:281px;top:128px;width:944px;height:22px;background:#dcdcdc;border:1px solid #b9b9b9"></div>
<svg style="left:286px;top:131px" width="16" height="16" viewBox="0 0 16 16" ><rect x="0.5" y="0.5" width="10" height="12" fill="#eaf4ff" stroke="#4a86e0"/><rect x="1" y="1" width="9" height="2" fill="#5aa0f0"/><rect x="5.5" y="3.5" width="10" height="12" fill="#fff" stroke="#3f68c8"/><path d="M9 6.5h5M7 8.5h7M9 10.5h5M7 12.5h7" stroke="#5a5a5a" stroke-width="1"/></svg>
<div class="t " style="left:306px;top:134px;font-size:10.9px;letter-spacing:-.1px">IDA View-A</div>
<svg style="left:1185px;top:134px" width="9" height="9" viewBox="0 0 9 9" ><rect x="2.5" y="0.5" width="6" height="5" fill="none" stroke="#111"/><rect x="2.5" y="0.5" width="6" height="1.6" fill="#111"/><rect x="0.5" y="3.5" width="6" height="5" fill="#dadada" stroke="#111"/><rect x="0.5" y="3.5" width="6" height="1.6" fill="#111"/></svg>
<svg style="left:1207px;top:135px" width="8" height="8" viewBox="0 0 8 8" ><path d="M0.7 0.5l7 6.400M7.700 0.5l-7 6.400" stroke="#000" stroke-width="1.6"/></svg>
<div class="a " style="left:281px;top:152px;width:111px;height:1030px;background:#fff"></div>
<svg style="left:281px;top:152px" width="112" height="1030" viewBox="0 0 112 1030" ><rect x="26" y="6" width="3" height="1021" fill="#ff0000"/><path d="M27.5 2.5l5 5.5h-10z" fill="#ff0000"/><rect x="58" y="6" width="3" height="951.0" fill="#ff0000"/><path d="M59.500 2.5l5 5.5h-10z" fill="#ff0000"/><rect x="58" y="954.0" width="49" height="3" fill="#ff0000"/><rect x="57" y="803.0" width="5" height="5" fill="#fff"/><rect x="27" y="804.0" width="80" height="3" fill="#ff0000"/><rect x="57" y="107.5" width="5" height="4" fill="#fff"/><path d="M43.500 3V109.5H96" fill="none" stroke="#ff0000" stroke-width="1"/><path d="M96 105.0l5 4.5-5 4.500z" fill="#ff0000"/><path d="M97 274.5H91.5V190.5H106" fill="none" stroke="#c0c0c0" stroke-width="1" stroke-dasharray="5 5"/><path d="M96 270.0l5 4.5-5 4.5z" fill="#c0c0c0"/><path d="M97 364.5H75.5V220.5H106" fill="none" stroke="#c0c0c0" stroke-width="1"/><path d="M96 360.0l5 4.5-5 4.5z" fill="#c0c0c0"/><path d="M97 499.5H91.5V400.5H106" fill="none" stroke="#c0c0c0" stroke-width="1" stroke-dasharray="5 5"/><path d="M96 495.0l5 4.5-5 4.5z" fill="#c0c0c0"/><path d="M97 544.5H75.5V655.5H106" fill="none" stroke="#c0c0c0" stroke-width="3" stroke-dasharray="5 5"/><path d="M96 540.0l5 4.5-5 4.5z" fill="#c0c0c0"/><path d="M97 694.5H91.5V625.5H106" fill="none" stroke="#c0c0c0" stroke-width="1" stroke-dasharray="5 5"/><path d="M96 690.0l5 4.5-5 4.5z" fill="#c0c0c0"/><path d="M97 784.5H91.5V730.5H106" fill="none" stroke="#c0c0c0" stroke-width="1" stroke-dasharray="5 5"/><path d="M96 780.0l5 4.5-5 4.5z" fill="#c0c0c0"/><circle cx="106" cy="110.0" r="3.2" fill="#9999ff"/><circle cx="106" cy="125.0" r="3.2" fill="#9999ff"/><circle cx="106" cy="140.0" r="3.2" fill="#9999ff"/><circle cx="106" cy="155.0" r="3.2" fill="#9999ff"/><circle cx="106" cy="170.0" r="3.2" fill="#9999ff"/><circle cx="106" cy="185.0" r="3.2" fill="#9999ff"/><circle cx="106" cy="200.0" r="3.2" fill="#9999ff"/><circle cx="106" cy="215.0" r="3.2" fill="#9999ff"/><circle cx="106" cy="275.0" r="3.2" fill="#9999ff"/><circle cx="106" cy="290.0" r="3.2" fill="#9999ff"/><circle cx="106" cy="305.0" r="3.2" fill="#9999ff"/><circle cx="106" cy="320.0" r="3.2" fill="#9999ff"/><circle cx="106" cy="365.0" r="3.2" fill="#9999ff"/><circle cx="106" cy="380.0" r="3.2" fill="#9999ff"/><circle cx="106" cy="395.0" r="3.2" fill="#9999ff"/><circle cx="106" cy="410.0" r="3.2" fill="#9999ff"/><circle cx="106" cy="425.0" r="3.2" fill="#9999ff"/><circle cx="106" cy="440.0" r="3.2" fill="#9999ff"/><circle cx="106" cy="455.0" r="3.2" fill="#9999ff"/><circle cx="106" cy="500.0" r="3.2" fill="#9999ff"/><circle cx="106" cy="545.0" r="3.2" fill="#9999ff"/><circle cx="106" cy="560.0" r="3.2" fill="#9999ff"/><circle cx="106" cy="575.0" r="3.2" fill="#9999ff"/><circle cx="106" cy="590.0" r="3.2" fill="#9999ff"/><circle cx="106" cy="605.0" r="3.2" fill="#9999ff"/><circle cx="106" cy="620.0" r="3.2" fill="#9999ff"/><circle cx="106" cy="635.0" r="3.2" fill="#9999ff"/><circle cx="106" cy="650.0" r="3.2" fill="#9999ff"/><circle cx="106" cy="695.0" r="3.2" fill="#9999ff"/><circle cx="106" cy="710.0" r="3.2" fill="#9999ff"/><circle cx="106" cy="725.0" r="3.2" fill="#9999ff"/><circle cx="106" cy="740.0" r="3.2" fill="#9999ff"/><circle cx="106" cy="785.0" r="3.2" fill="#9999ff"/><circle cx="106" cy="800.0" r="3.2" fill="#9999ff"/><circle cx="106" cy="950.0" r="3.2" fill="#9999ff"/></svg>
<div class="a " style="left:397px;top:152px;width:828px;height:1031px;background:#fff;border:1px solid #828790;border-bottom:none"></div>
<div class="a " style="left:398px;top:738px;width:810px;height:15px;background:#bfbcab"></div>
<div class="a m" style="left:399px;top:154px;width:808px;height:995px;overflow:hidden"><span class="k">.text:826B9AF8</span>
<span class="k">.text:826B9AF8</span>
<span class="k">.text:826B9AF8</span> <span class="n">sub_826B9AF8:</span>                           <span class="g"># CODE XREF: sub_826B2EA0+10<span class="ar">↑</span>p</span>
<span class="k">.text:826B9AF8</span>                                         <span class="g"># sub_826B2ED8+4<span class="ar">↑</span>j</span>
<span class="k">.text:826B9AF8</span>
<span class="k">.text:826B9AF8</span> <span class="b">.set</span> <span class="g">var_30</span><span class="n">, -</span><span class="g">0x30</span>
<span class="k">.text:826B9AF8</span>
<span class="k">.text:826B9AF8</span>                 <span class="n">mfspr</span>   <span class="n">%r12, LR</span>
<span class="k">.text:826B9AFC</span>                 <span class="n">bl</span>      <span class="b">__savegprlr_29</span>
<span class="k">.text:826B9B00</span>                 <span class="n">stwu</span>    <span class="n">%sp, -</span><span class="g">0x80</span><span class="n">(%sp)</span>
<span class="k">.text:826B9B04</span>                 <span class="n">mr</span>      <span class="n">%r29, %r4</span>
<span class="k">.text:826B9B08</span>                 <span class="n">cmpwi</span>   <span class="n">cr6, %r3, -</span><span class="g">1</span>
<span class="k">.text:826B9B0C</span>                 <span class="n">bne</span>     <span class="n">cr6, loc_826B9B18</span>
<span class="k">.text:826B9B10</span>                 <span class="n">li</span>      <span class="n">%r11, </span><span class="g">0</span>
<span class="k">.text:826B9B14</span>                 <span class="n">b</span>       <span class="n">loc_826B9B28</span>
<span class="k">.text:826B9B18</span> <span class="y"># </span><span class="y th" style="width:600px">---------------------------------------------------------------------------</span>
<span class="k">.text:826B9B18</span>
<span class="k">.text:826B9B18</span> <span class="n">loc_826B9B18:</span>                           <span class="g"># CODE XREF: sub_826B9AF8+14<span class="ar">↑</span>j</span>
<span class="k">.text:826B9B18</span>                 <span class="n">rldicl</span>  <span class="n">%r10, %r3, </span><span class="g">0</span><span class="n">,</span><span class="g">32</span>
<span class="k">.text:826B9B1C</span>                 <span class="n">addi</span>    <span class="n">%r11, %sp, </span><span class="g">0x80</span><span class="n">+</span><span class="g">var_30</span>
<span class="k">.text:826B9B20</span>                 <span class="n">mulli</span>   <span class="n">%r10, %r10, -</span><span class="g">0x2710</span>
<span class="k">.text:826B9B24</span>                 <span class="n">std</span>     <span class="n">%r10, </span><span class="g">0x80</span><span class="n">+</span><span class="g">var_30</span><span class="n">(%sp)</span>
<span class="k">.text:826B9B28</span>
<span class="k">.text:826B9B28</span> <span class="n">loc_826B9B28:</span>                           <span class="g"># CODE XREF: sub_826B9AF8+1C<span class="ar">↑</span>j</span>
<span class="k">.text:826B9B28</span>                 <span class="n">mr</span>      <span class="n">%r30, %r11</span>
<span class="k">.text:826B9B2C</span>                 <span class="n">cmplwi</span>  <span class="n">cr6, %r11, </span><span class="g">0</span>
<span class="k">.text:826B9B30</span>                 <span class="n">bne</span>     <span class="n">cr6, loc_826B9B44</span>
<span class="k">.text:826B9B34</span>                 <span class="n">stw</span>     <span class="n">%r11, </span><span class="g">0x80</span><span class="n">+</span><span class="g">var_30</span><span class="n">+</span><span class="g">4</span><span class="n">(%sp)</span>
<span class="k">.text:826B9B38</span>                 <span class="n">lis</span>     <span class="n">%r11, -</span><span class="g">0x8000</span>
<span class="k">.text:826B9B3C</span>                 <span class="n">addi</span>    <span class="n">%r30, %sp, </span><span class="g">0x80</span><span class="n">+</span><span class="g">var_30</span>
<span class="k">.text:826B9B40</span>                 <span class="n">stw</span>     <span class="n">%r11, </span><span class="g">0x80</span><span class="n">+</span><span class="g">var_30</span><span class="n">(%sp)</span>
<span class="k">.text:826B9B44</span>
<span class="k">.text:826B9B44</span> <span class="n">loc_826B9B44:</span>                           <span class="g"># CODE XREF: sub_826B9AF8+38<span class="ar">↑</span>j</span>
<span class="k">.text:826B9B44</span>                 <span class="n">clrlwi</span>  <span class="n">%r31, %r29, </span><span class="g">24</span>
<span class="k">.text:826B9B48</span>
<span class="k">.text:826B9B48</span> <span class="n">loc_826B9B48:</span>                           <span class="g"># CODE XREF: sub_826B9AF8+6C<span class="ar">↓</span>j</span>
<span class="k">.text:826B9B48</span>                 <span class="n">mr</span>      <span class="n">%r5, %r30</span>       <span class="b"># interval</span>
<span class="k">.text:826B9B4C</span>                 <span class="n">mr</span>      <span class="n">%r4, %r29</span>       <span class="b"># alertable</span>
<span class="k">.text:826B9B50</span>                 <span class="n">li</span>      <span class="n">%r3, </span><span class="g">1</span>          <span class="b"># waitMode</span>
<span class="w">.text:826B9B54</span>                 <span class="n">bl</span>      <span class="w">KeDelayExecutionThread</span>
<span class="k">.text:826B9B58</span>                 <span class="n">cmplwi</span>  <span class="n">cr6, %r31, </span><span class="g">0</span>
<span class="k">.text:826B9B5C</span>                 <span class="n">beq</span>     <span class="n">cr6, loc_826B9B68</span>
<span class="k">.text:826B9B60</span>                 <span class="n">cmpwi</span>   <span class="n">cr6, %r3, </span><span class="g">0x101</span>
<span class="k">.text:826B9B64</span>                 <span class="n">beq</span>     <span class="n">cr6, loc_826B9B48</span>
<span class="k">.text:826B9B68</span>
<span class="k">.text:826B9B68</span> <span class="n">loc_826B9B68:</span>                           <span class="g"># CODE XREF: sub_826B9AF8+64<span class="ar">↑</span>j</span>
<span class="k">.text:826B9B68</span>                 <span class="n">cmpwi</span>   <span class="n">cr6, %r3, </span><span class="g">0xC0</span>
<span class="k">.text:826B9B6C</span>                 <span class="n">li</span>      <span class="n">%r3, </span><span class="g">0xC0</span>
<span class="k">.text:826B9B70</span>                 <span class="n">beq</span>     <span class="n">cr6, loc_826B9B78</span>
<span class="k">.text:826B9B74</span>                 <span class="n">li</span>      <span class="n">%r3, </span><span class="g">0</span>
<span class="k">.text:826B9B78</span>
<span class="k">.text:826B9B78</span> <span class="n">loc_826B9B78:</span>                           <span class="g"># CODE XREF: sub_826B9AF8+78<span class="ar">↑</span>j</span>
<span class="k">.text:826B9B78</span>                 <span class="n">addi</span>    <span class="n">%sp, %sp, </span><span class="g">0x80</span>
<span class="k">.text:826B9B7C</span>                 <span class="n">b</span>       <span class="b">__restgprlr_29</span>
<span class="k">.text:826B9B7C</span> <span class="y"># End of function sub_826B9AF8</span>
<span class="k">.text:826B9B7C</span>
<span class="k">.text:826B9B80</span>
<span class="k">.text:826B9B80</span> <span class="y"># </span><span class="y te th" style="width:120px">===============</span><span class="y"> S U B R O U T I N E </span><span class="y te th" style="width:312px">=======================================</span>
<span class="k">.text:826B9B80</span>
<span class="k">.text:826B9B80</span> <span class="y"># Attributes: thunk</span>
<span class="k">.text:826B9B80</span>
<span class="k">.text:826B9B80</span> <span class="n">sub_826B9B80:</span>                           <span class="g"># CODE XREF: sub_826B2EE0+1C<span class="ar">↑</span>p</span>
<span class="k">.text:826B9B80</span>                                         <span class="g"># sub_826B2F20:loc_826B2F78<span class="ar">↑</span>p ...</span>
<span class="k">.text:826B9B80</span>                 <span class="n">b</span>       <span class="n">sub_826B8FE0</span>
<span class="k">.text:826B9B80</span> <span class="y"># End of function sub_826B9B80</span>
<span class="k">.text:826B9B80</span></div>
<div class="a " style="left:398px;top:1146px;width:810px;height:18px;background:#f0f0f0"></div>
<div class="t " style="left:399px;top:1150px;font-family:'Liberation Mono',monospace;font-size:11.667px">UNKNOWN</div>
<div class="t " style="left:454px;top:1150px;font-family:'Liberation Mono',monospace;font-size:11.667px">826B9B54: sub_826B9AF8+5C</div>
<div class="a " style="left:449px;top:1148px;width:1px;height:13px;background:#c8c8c8"></div>
<div class="a " style="left:630px;top:1148px;width:1px;height:13px;background:#c8c8c8"></div>
<div class="a " style="left:1208px;top:153px;width:16px;height:1011px;background:linear-gradient(90deg,#e3e3e3 0%,#ededed 30%,#f0f0f0 100%)"></div>
<svg style="left:1213px;top:160px" width="7" height="4" viewBox="0 0 7 4" ><path d="M0 4L3.5 0 7 4z" fill="#505050"/></svg>
<svg style="left:1213px;top:1153px" width="7" height="4" viewBox="0 0 7 4" ><path d="M0 0L3.5 4 7 0z" fill="#505050"/></svg>
<div class="a " style="left:1209px;top:754px;width:14px;height:19px;border:1px solid #979797;border-radius:2px;background:linear-gradient(90deg,#f4f4f4 0%,#e9e9e9 45%,#d4d4d4 55%,#dcdcdc 100%)"></div>
<div class="a " style="left:398px;top:1164px;width:810px;height:17px;background:linear-gradient(180deg,#e3e3e3 0%,#ededed 30%,#f0f0f0 100%)"></div>
<svg style="left:404px;top:1169px" width="4" height="7" viewBox="0 0 4 7" ><path d="M4 0L0 3.5 4 7z" fill="#404040"/></svg>
<svg style="left:1196px;top:1169px" width="4" height="7" viewBox="0 0 4 7" ><path d="M0 0L4 3.5 0 7z" fill="#404040"/></svg>
<div class="a " style="left:416px;top:1165px;width:350px;height:15px;border:1px solid #979797;border-radius:2px;background:linear-gradient(180deg,#f4f4f4 0%,#e9e9e9 45%,#d4d4d4 55%,#dcdcdc 100%)"></div>
<svg style="left:587px;top:1169px" width="8" height="7" viewBox="0 0 8 7" ><path d="M0.5 0v7M3.5 0v7M6.5 0v7" stroke="#5a5a5a" stroke-width="1"/><path d="M1.5 0v7M4.5 0v7M7.5 0v7" stroke="#fff" stroke-width="1"/></svg>
<div class="a " style="left:1208px;top:1164px;width:16px;height:17px;background:#f0f0f0"></div>
<div class="a " style="left:397px;top:1181px;width:828px;height:1px;background:#828790"></div>
<div class="a " style="left:398px;top:1182px;width:826px;height:1px;background:#f0f0f0"></div>
<div class="a " style="left:1228px;top:128px;width:691px;height:22px;background:#dcdcdc;border:1px solid #b9b9b9"></div>
<svg style="left:1233px;top:131px" width="16" height="16" viewBox="0 0 16 16" ><rect x="0.5" y="0.5" width="10" height="12" fill="#eaf4ff" stroke="#4a86e0"/><rect x="1" y="1" width="9" height="2" fill="#5aa0f0"/><rect x="5.5" y="3.5" width="10" height="12" fill="#fff" stroke="#3f68c8"/><path d="M9 6.5h5M7 8.5h7M9 10.5h5M7 12.5h7" stroke="#5a5a5a" stroke-width="1"/></svg>
<div class="t " style="left:1253px;top:134px;font-size:10.9px;letter-spacing:-.1px">IDA View-B</div>
<svg style="left:1879px;top:134px" width="9" height="9" viewBox="0 0 9 9" ><rect x="2.5" y="0.5" width="6" height="5" fill="none" stroke="#111"/><rect x="2.5" y="0.5" width="6" height="1.6" fill="#111"/><rect x="0.5" y="3.5" width="6" height="5" fill="#dadada" stroke="#111"/><rect x="0.5" y="3.5" width="6" height="1.6" fill="#111"/></svg>
<svg style="left:1901px;top:135px" width="8" height="8" viewBox="0 0 8 8" ><path d="M0.7 0.5l7 6.400M7.700 0.5l-7 6.400" stroke="#000" stroke-width="1.6"/></svg>
<div class="a " style="left:1228px;top:152px;width:692px;height:1030px;background:#f0f0f0;border:1px solid #828790"></div>
<div class="a " style="left:1229px;top:153px;width:690px;height:1010px;background:linear-gradient(180deg,#ffffff 0%,#f6fdff 25%,#eafaff 60%,#dff6ff 100%)"></div>
<div class="a" style="left:1229px;top:153px;width:690px;height:1010px;overflow:hidden"><div class="a " style="left:390px;top:95px;width:5px;height:216px;background:linear-gradient(90deg,#84878a,#909396)"></div>
<div class="a " style="left:189px;top:305px;width:202px;height:5px;background:linear-gradient(180deg,#6f7375 0%,#8c9093 50%,#b4bcc0 100%);-webkit-mask-image:linear-gradient(90deg,rgba(0,0,0,0) 0,#000 5px)"></div>
<div class="a " style="left:390px;top:91px;width:5px;height:4px;background:linear-gradient(180deg,rgba(132,135,138,0),rgba(132,135,138,.5))"></div>
<div class="a " style="left:262px;top:344px;width:5px;height:51px;background:linear-gradient(90deg,#84878a,#909396)"></div>
<div class="a " style="left:101px;top:389px;width:162px;height:5px;background:linear-gradient(180deg,#6f7375 0%,#8c9093 50%,#b4bcc0 100%);-webkit-mask-image:linear-gradient(90deg,rgba(0,0,0,0) 0,#000 5px)"></div>
<div class="a " style="left:262px;top:340px;width:5px;height:4px;background:linear-gradient(180deg,rgba(132,135,138,0),rgba(132,135,138,.5))"></div>
<div class="a " style="left:518px;top:344px;width:5px;height:111px;background:linear-gradient(90deg,#84878a,#909396)"></div>
<div class="a " style="left:277px;top:449px;width:242px;height:5px;background:linear-gradient(180deg,#6f7375 0%,#8c9093 50%,#b4bcc0 100%);-webkit-mask-image:linear-gradient(90deg,rgba(0,0,0,0) 0,#000 5px)"></div>
<div class="a " style="left:518px;top:340px;width:5px;height:4px;background:linear-gradient(180deg,rgba(132,135,138,0),rgba(132,135,138,.5))"></div>
<div class="a " style="left:410px;top:488px;width:5px;height:96px;background:linear-gradient(90deg,#84878a,#909396)"></div>
<div class="a " style="left:209px;top:578px;width:202px;height:5px;background:linear-gradient(180deg,#6f7375 0%,#8c9093 50%,#b4bcc0 100%);-webkit-mask-image:linear-gradient(90deg,rgba(0,0,0,0) 0,#000 5px)"></div>
<div class="a " style="left:410px;top:484px;width:5px;height:4px;background:linear-gradient(180deg,rgba(132,135,138,0),rgba(132,135,138,.5))"></div>
<div class="a " style="left:435px;top:617px;width:5px;height:81px;background:linear-gradient(90deg,#84878a,#909396)"></div>
<div class="a " style="left:178px;top:692px;width:258px;height:5px;background:linear-gradient(180deg,#6f7375 0%,#8c9093 50%,#b4bcc0 100%);-webkit-mask-image:linear-gradient(90deg,rgba(0,0,0,0) 0,#000 5px)"></div>
<div class="a " style="left:435px;top:613px;width:5px;height:4px;background:linear-gradient(180deg,rgba(132,135,138,0),rgba(132,135,138,.5))"></div>
<div class="a " style="left:402px;top:731px;width:5px;height:66px;background:linear-gradient(90deg,#84878a,#909396)"></div>
<div class="a " style="left:225px;top:791px;width:178px;height:5px;background:linear-gradient(180deg,#6f7375 0%,#8c9093 50%,#b4bcc0 100%);-webkit-mask-image:linear-gradient(90deg,rgba(0,0,0,0) 0,#000 5px)"></div>
<div class="a " style="left:402px;top:727px;width:5px;height:4px;background:linear-gradient(180deg,rgba(132,135,138,0),rgba(132,135,138,.5))"></div>
<div class="a " style="left:459px;top:830px;width:5px;height:141px;background:linear-gradient(90deg,#84878a,#909396)"></div>
<div class="a " style="left:178px;top:965px;width:282px;height:5px;background:linear-gradient(180deg,#6f7375 0%,#8c9093 50%,#b4bcc0 100%);-webkit-mask-image:linear-gradient(90deg,rgba(0,0,0,0) 0,#000 5px)"></div>
<div class="a " style="left:459px;top:826px;width:5px;height:4px;background:linear-gradient(180deg,rgba(132,135,138,0),rgba(132,135,138,.5))"></div>
<div class="a " style="left:450px;top:1004px;width:5px;height:50px;background:linear-gradient(90deg,#84878a,#909396)"></div>
<div class="a " style="left:249px;top:1048px;width:202px;height:5px;background:linear-gradient(180deg,#6f7375 0%,#8c9093 50%,#b4bcc0 100%);-webkit-mask-image:linear-gradient(90deg,rgba(0,0,0,0) 0,#000 5px)"></div>
<div class="a " style="left:450px;top:1000px;width:5px;height:4px;background:linear-gradient(180deg,rgba(132,135,138,0),rgba(132,135,138,.5))"></div>
<svg style="left:0;top:0" width="690" height="1010" viewBox="0 0 690 1010" shape-rendering="crispEdges"><rect x="277" y="305" width="1" height="16" fill="#ff0000"/><rect x="179" y="320" width="99" height="1" fill="#ff0000"/><rect x="179" y="320" width="1" height="8" fill="#ff0000"/><rect x="297" y="305" width="1" height="16" fill="#008000"/><rect x="297" y="320" width="99" height="1" fill="#008000"/><rect x="395" y="320" width="1" height="8" fill="#008000"/><rect x="179" y="389" width="1" height="76" fill="#0000ff"/><rect x="179" y="464" width="119" height="1" fill="#0000ff"/><rect x="297" y="464" width="1" height="8" fill="#0000ff"/><rect x="395" y="449" width="1" height="16" fill="#0000ff"/><rect x="317" y="464" width="79" height="1" fill="#0000ff"/><rect x="317" y="464" width="1" height="8" fill="#0000ff"/><rect x="297" y="578" width="1" height="16" fill="#ff0000"/><rect x="297" y="593" width="8" height="1" fill="#ff0000"/><rect x="304" y="593" width="1" height="8" fill="#ff0000"/><rect x="317" y="578" width="1" height="16" fill="#008000"/><rect x="317" y="593" width="129" height="1" fill="#008000"/><rect x="445" y="593" width="1" height="115" fill="#008000"/><rect x="321" y="707" width="125" height="1" fill="#008000"/><rect x="321" y="707" width="1" height="8" fill="#008000"/><rect x="304" y="692" width="1" height="16" fill="#0000ff"/><rect x="301" y="707" width="4" height="1" fill="#0000ff"/><rect x="301" y="707" width="1" height="8" fill="#0000ff"/><rect x="311" y="791" width="1" height="16" fill="#0000ff"/><rect x="306" y="806" width="6" height="1" fill="#0000ff"/><rect x="306" y="806" width="1" height="8" fill="#0000ff"/><rect x="325" y="806" width="2" height="8" fill="#008000"/><rect x="326" y="805" width="188" height="2" fill="#008000"/><rect x="512" y="806" width="2" height="205" fill="#008000"/><rect x="326" y="965" width="1" height="16" fill="#ff0000"/><rect x="326" y="980" width="22" height="1" fill="#ff0000"/><rect x="347" y="980" width="1" height="8" fill="#ff0000"/><rect x="306" y="965" width="1" height="16" fill="#008000"/><rect x="176" y="980" width="131" height="1" fill="#008000"/><rect x="176" y="980" width="1" height="31" fill="#008000"/><path d="M175 325h9l-4.500 10z" fill="#ff0000"/><path d="M391 325h9l-4.500 10z" fill="#008000"/><path d="M293 469h9l-4.500 10z" fill="#0000ff"/><path d="M313 469h9l-4.500 10z" fill="#0000ff"/><path d="M300 598h9l-4.500 10z" fill="#ff0000"/><path d="M317 712h9l-4.500 10z" fill="#008000"/><path d="M297 712h9l-4.500 10z" fill="#0000ff"/><path d="M302 811h9l-4.500 10z" fill="#0000ff"/><path d="M322 811h9l-4.500 10z" fill="#008000"/><path d="M343 985h9l-4.500 10z" fill="#ff0000"/></svg>
<div class="a " style="left:184px;top:86px;width:206px;height:219px;background:#fff;border:1px solid #000"></div>
<div class="a " style="left:184px;top:104px;width:206px;height:1px;background:#000"></div>
<svg style="left:190px;top:92px" width="48" height="8" viewBox="0 0 48 8" ><rect x="0" y="0" width="10" height="7" fill="#101060"/><rect x="1.0" y="0" width="1.2" height="6" fill="#2020ff"/><rect x="2.15" y="0" width="1.2" height="6" fill="#00d0ff"/><rect x="3.3" y="0" width="1.2" height="6" fill="#20e020"/><rect x="4.449999999999999" y="0" width="1.2" height="6" fill="#f0f020"/><rect x="5.6" y="0" width="1.2" height="6" fill="#ff6060"/><rect x="6.75" y="0" width="1.2" height="6" fill="#e020e0"/><rect x="7.8999999999999995" y="0" width="1.2" height="6" fill="#6020ff"/><rect x="0" y="0" width="1" height="7" fill="#000060"/><rect x="9" y="0" width="1" height="7" fill="#000060"/><g transform="translate(19,0)"><path d="M0 3v4M10 3v4M0 5h10" stroke="#000080" stroke-width="1.2" fill="none"/><path d="M3 5l6-5" stroke="#f0a020" stroke-width="1.5"/><path d="M1 5l3-1" stroke="#000" stroke-width="1"/></g><g transform="translate(38,0)"><rect x="0.5" y="0.5" width="9" height="6" fill="#fff" stroke="#3f7fe0"/><path d="M2 2h2v2h2M7 2.500h1" stroke="#0000c0" fill="none"/><path d="M4 5h4" stroke="#f06020"/></g></svg>
<div class="a m" style="left:187px;top:108px">


<span class="n">sub_826B9AF8:</span>

<span class="b">.set</span> <span class="g">var_30</span><span class="n">, -</span><span class="g">0x30</span>

<span class="n">mfspr</span>   <span class="n">%r12, LR</span>
<span class="n">bl</span>      <span class="b">__savegprlr_29</span>
<span class="n" style="background:#ffff00">stwu</span>    <span class="n">%sp, -</span><span class="g">0x80</span><span class="n">(%sp)</span>
<span class="n">mr</span>      <span class="n">%r29, %r4</span>
<span class="n">cmpwi</span>   <span class="n">cr6, %r3, -</span><span class="g">1</span>
<span class="n">bne</span>     <span class="n">cr6, loc_826B9B18</span></div>
<div class="a " style="left:96px;top:335px;width:166px;height:54px;background:#fff;border:1px solid #000"></div>
<div class="a " style="left:96px;top:353px;width:166px;height:1px;background:#000"></div>
<svg style="left:102px;top:341px" width="48" height="8" viewBox="0 0 48 8" ><rect x="0" y="0" width="10" height="7" fill="#101060"/><rect x="1.0" y="0" width="1.2" height="6" fill="#2020ff"/><rect x="2.15" y="0" width="1.2" height="6" fill="#00d0ff"/><rect x="3.3" y="0" width="1.2" height="6" fill="#20e020"/><rect x="4.449999999999999" y="0" width="1.2" height="6" fill="#f0f020"/><rect x="5.6" y="0" width="1.2" height="6" fill="#ff6060"/><rect x="6.75" y="0" width="1.2" height="6" fill="#e020e0"/><rect x="7.8999999999999995" y="0" width="1.2" height="6" fill="#6020ff"/><rect x="0" y="0" width="1" height="7" fill="#000060"/><rect x="9" y="0" width="1" height="7" fill="#000060"/><g transform="translate(19,0)"><path d="M0 3v4M10 3v4M0 5h10" stroke="#000080" stroke-width="1.2" fill="none"/><path d="M3 5l6-5" stroke="#f0a020" stroke-width="1.5"/><path d="M1 5l3-1" stroke="#000" stroke-width="1"/></g><g transform="translate(38,0)"><rect x="0.5" y="0.5" width="9" height="6" fill="#fff" stroke="#3f7fe0"/><path d="M2 2h2v2h2M7 2.500h1" stroke="#0000c0" fill="none"/><path d="M4 5h4" stroke="#f06020"/></g></svg>
<div class="a m" style="left:99px;top:357px"><span class="n">li</span>      <span class="n">%r11, </span><span class="g">0</span>
<span class="n">b</span>       <span class="n">loc_826B9B28</span></div>
<div class="a " style="left:272px;top:335px;width:246px;height:114px;background:#fff;border:1px solid #000"></div>
<div class="a " style="left:272px;top:353px;width:246px;height:1px;background:#000"></div>
<svg style="left:278px;top:341px" width="48" height="8" viewBox="0 0 48 8" ><rect x="0" y="0" width="10" height="7" fill="#101060"/><rect x="1.0" y="0" width="1.2" height="6" fill="#2020ff"/><rect x="2.15" y="0" width="1.2" height="6" fill="#00d0ff"/><rect x="3.3" y="0" width="1.2" height="6" fill="#20e020"/><rect x="4.449999999999999" y="0" width="1.2" height="6" fill="#f0f020"/><rect x="5.6" y="0" width="1.2" height="6" fill="#ff6060"/><rect x="6.75" y="0" width="1.2" height="6" fill="#e020e0"/><rect x="7.8999999999999995" y="0" width="1.2" height="6" fill="#6020ff"/><rect x="0" y="0" width="1" height="7" fill="#000060"/><rect x="9" y="0" width="1" height="7" fill="#000060"/><g transform="translate(19,0)"><path d="M0 3v4M10 3v4M0 5h10" stroke="#000080" stroke-width="1.2" fill="none"/><path d="M3 5l6-5" stroke="#f0a020" stroke-width="1.5"/><path d="M1 5l3-1" stroke="#000" stroke-width="1"/></g><g transform="translate(38,0)"><rect x="0.5" y="0.5" width="9" height="6" fill="#fff" stroke="#3f7fe0"/><path d="M2 2h2v2h2M7 2.500h1" stroke="#0000c0" fill="none"/><path d="M4 5h4" stroke="#f06020"/></g></svg>
<div class="a m" style="left:275px;top:357px">
<span class="n">loc_826B9B18:</span>
<span class="n">rldicl</span>  <span class="n">%r10, %r3, </span><span class="g">0</span><span class="n">,</span><span class="g">32</span>
<span class="n">addi</span>    <span class="n">%r11, %sp, </span><span class="g">0x80</span><span class="n">+</span><span class="g">var_30</span>
<span class="n">mulli</span>   <span class="n">%r10, %r10, -</span><span class="g">0x2710</span>
<span class="n">std</span>     <span class="n">%r10, </span><span class="g">0x80</span><span class="n">+</span><span class="g">var_30</span><span class="n">(%sp)</span></div>
<div class="a " style="left:204px;top:479px;width:206px;height:99px;background:#fff;border:1px solid #000"></div>
<div class="a " style="left:204px;top:497px;width:206px;height:1px;background:#000"></div>
<svg style="left:210px;top:485px" width="48" height="8" viewBox="0 0 48 8" ><rect x="0" y="0" width="10" height="7" fill="#101060"/><rect x="1.0" y="0" width="1.2" height="6" fill="#2020ff"/><rect x="2.15" y="0" width="1.2" height="6" fill="#00d0ff"/><rect x="3.3" y="0" width="1.2" height="6" fill="#20e020"/><rect x="4.449999999999999" y="0" width="1.2" height="6" fill="#f0f020"/><rect x="5.6" y="0" width="1.2" height="6" fill="#ff6060"/><rect x="6.75" y="0" width="1.2" height="6" fill="#e020e0"/><rect x="7.8999999999999995" y="0" width="1.2" height="6" fill="#6020ff"/><rect x="0" y="0" width="1" height="7" fill="#000060"/><rect x="9" y="0" width="1" height="7" fill="#000060"/><g transform="translate(19,0)"><path d="M0 3v4M10 3v4M0 5h10" stroke="#000080" stroke-width="1.2" fill="none"/><path d="M3 5l6-5" stroke="#f0a020" stroke-width="1.5"/><path d="M1 5l3-1" stroke="#000" stroke-width="1"/></g><g transform="translate(38,0)"><rect x="0.5" y="0.5" width="9" height="6" fill="#fff" stroke="#3f7fe0"/><path d="M2 2h2v2h2M7 2.500h1" stroke="#0000c0" fill="none"/><path d="M4 5h4" stroke="#f06020"/></g></svg>
<div class="a m" style="left:207px;top:501px">
<span class="n">loc_826B9B28:</span>
<span class="n">mr</span>      <span class="n">%r30, %r11</span>
<span class="n">cmplwi</span>  <span class="n">cr6, %r11, </span><span class="g">0</span>
<span class="n">bne</span>     <span class="n">cr6, loc_826B9B44</span></div>
<div class="a " style="left:173px;top:608px;width:262px;height:84px;background:#fff;border:1px solid #000"></div>
<div class="a " style="left:173px;top:626px;width:262px;height:1px;background:#000"></div>
<svg style="left:179px;top:614px" width="48" height="8" viewBox="0 0 48 8" ><rect x="0" y="0" width="10" height="7" fill="#101060"/><rect x="1.0" y="0" width="1.2" height="6" fill="#2020ff"/><rect x="2.15" y="0" width="1.2" height="6" fill="#00d0ff"/><rect x="3.3" y="0" width="1.2" height="6" fill="#20e020"/><rect x="4.449999999999999" y="0" width="1.2" height="6" fill="#f0f020"/><rect x="5.6" y="0" width="1.2" height="6" fill="#ff6060"/><rect x="6.75" y="0" width="1.2" height="6" fill="#e020e0"/><rect x="7.8999999999999995" y="0" width="1.2" height="6" fill="#6020ff"/><rect x="0" y="0" width="1" height="7" fill="#000060"/><rect x="9" y="0" width="1" height="7" fill="#000060"/><g transform="translate(19,0)"><path d="M0 3v4M10 3v4M0 5h10" stroke="#000080" stroke-width="1.2" fill="none"/><path d="M3 5l6-5" stroke="#f0a020" stroke-width="1.5"/><path d="M1 5l3-1" stroke="#000" stroke-width="1"/></g><g transform="translate(38,0)"><rect x="0.5" y="0.5" width="9" height="6" fill="#fff" stroke="#3f7fe0"/><path d="M2 2h2v2h2M7 2.500h1" stroke="#0000c0" fill="none"/><path d="M4 5h4" stroke="#f06020"/></g></svg>
<div class="a m" style="left:176px;top:630px"><span class="n">stw</span>     <span class="n">%r11, </span><span class="g">0x80</span><span class="n">+</span><span class="g">var_30</span><span class="n">+</span><span class="g">4</span><span class="n">(%sp)</span>
<span class="n">lis</span>     <span class="n">%r11, -</span><span class="g">0x8000</span>
<span class="n">addi</span>    <span class="n">%r30, %sp, </span><span class="g">0x80</span><span class="n">+</span><span class="g">var_30</span>
<span class="n">stw</span>     <span class="n">%r11, </span><span class="g">0x80</span><span class="n">+</span><span class="g">var_30</span><span class="n">(%sp)</span></div>
<div class="a " style="left:220px;top:722px;width:182px;height:69px;background:#fff;border:1px solid #000"></div>
<div class="a " style="left:220px;top:740px;width:182px;height:1px;background:#000"></div>
<svg style="left:226px;top:728px" width="48" height="8" viewBox="0 0 48 8" ><rect x="0" y="0" width="10" height="7" fill="#101060"/><rect x="1.0" y="0" width="1.2" height="6" fill="#2020ff"/><rect x="2.15" y="0" width="1.2" height="6" fill="#00d0ff"/><rect x="3.3" y="0" width="1.2" height="6" fill="#20e020"/><rect x="4.449999999999999" y="0" width="1.2" height="6" fill="#f0f020"/><rect x="5.6" y="0" width="1.2" height="6" fill="#ff6060"/><rect x="6.75" y="0" width="1.2" height="6" fill="#e020e0"/><rect x="7.8999999999999995" y="0" width="1.2" height="6" fill="#6020ff"/><rect x="0" y="0" width="1" height="7" fill="#000060"/><rect x="9" y="0" width="1" height="7" fill="#000060"/><g transform="translate(19,0)"><path d="M0 3v4M10 3v4M0 5h10" stroke="#000080" stroke-width="1.2" fill="none"/><path d="M3 5l6-5" stroke="#f0a020" stroke-width="1.5"/><path d="M1 5l3-1" stroke="#000" stroke-width="1"/></g><g transform="translate(38,0)"><rect x="0.5" y="0.5" width="9" height="6" fill="#fff" stroke="#3f7fe0"/><path d="M2 2h2v2h2M7 2.500h1" stroke="#0000c0" fill="none"/><path d="M4 5h4" stroke="#f06020"/></g></svg>
<div class="a m" style="left:223px;top:744px">
<span class="n">loc_826B9B44:</span>
<span class="n">clrlwi</span>  <span class="n">%r31, %r29, </span><span class="g">24</span></div>
<div class="a " style="left:173px;top:821px;width:286px;height:144px;background:#fff;border:1px solid #000"></div>
<div class="a " style="left:173px;top:839px;width:286px;height:1px;background:#000"></div>
<svg style="left:179px;top:827px" width="48" height="8" viewBox="0 0 48 8" ><rect x="0" y="0" width="10" height="7" fill="#101060"/><rect x="1.0" y="0" width="1.2" height="6" fill="#2020ff"/><rect x="2.15" y="0" width="1.2" height="6" fill="#00d0ff"/><rect x="3.3" y="0" width="1.2" height="6" fill="#20e020"/><rect x="4.449999999999999" y="0" width="1.2" height="6" fill="#f0f020"/><rect x="5.6" y="0" width="1.2" height="6" fill="#ff6060"/><rect x="6.75" y="0" width="1.2" height="6" fill="#e020e0"/><rect x="7.8999999999999995" y="0" width="1.2" height="6" fill="#6020ff"/><rect x="0" y="0" width="1" height="7" fill="#000060"/><rect x="9" y="0" width="1" height="7" fill="#000060"/><g transform="translate(19,0)"><path d="M0 3v4M10 3v4M0 5h10" stroke="#000080" stroke-width="1.2" fill="none"/><path d="M3 5l6-5" stroke="#f0a020" stroke-width="1.5"/><path d="M1 5l3-1" stroke="#000" stroke-width="1"/></g><g transform="translate(38,0)"><rect x="0.5" y="0.5" width="9" height="6" fill="#fff" stroke="#3f7fe0"/><path d="M2 2h2v2h2M7 2.500h1" stroke="#0000c0" fill="none"/><path d="M4 5h4" stroke="#f06020"/></g></svg>
<div class="a m" style="left:176px;top:843px">
<span class="n">loc_826B9B48:</span>           <span class="b"># interval</span>
<span class="n">mr</span>      <span class="n">%r5, %r30</span>
<span class="n">mr</span>      <span class="n">%r4, %r29</span>       <span class="b"># alertable</span>
<span class="n">li</span>      <span class="n">%r3, </span><span class="g">1</span>          <span class="b"># waitMode</span>
<span class="n">bl</span>      <span class="p">KeDelayExecutionThread</span>
<span class="n">cmplwi</span>  <span class="n">cr6, %r31, </span><span class="g">0</span>
<span class="n">beq</span>     <span class="n">cr6, loc_826B9B68</span></div>
<div class="a " style="left:244px;top:995px;width:206px;height:53px;background:#fff;border:1px solid #000"></div>
<div class="a " style="left:244px;top:1013px;width:206px;height:1px;background:#000"></div>
<svg style="left:250px;top:1001px" width="48" height="8" viewBox="0 0 48 8" ><rect x="0" y="0" width="10" height="7" fill="#101060"/><rect x="1.0" y="0" width="1.2" height="6" fill="#2020ff"/><rect x="2.15" y="0" width="1.2" height="6" fill="#00d0ff"/><rect x="3.3" y="0" width="1.2" height="6" fill="#20e020"/><rect x="4.449999999999999" y="0" width="1.2" height="6" fill="#f0f020"/><rect x="5.6" y="0" width="1.2" height="6" fill="#ff6060"/><rect x="6.75" y="0" width="1.2" height="6" fill="#e020e0"/><rect x="7.8999999999999995" y="0" width="1.2" height="6" fill="#6020ff"/><rect x="0" y="0" width="1" height="7" fill="#000060"/><rect x="9" y="0" width="1" height="7" fill="#000060"/><g transform="translate(19,0)"><path d="M0 3v4M10 3v4M0 5h10" stroke="#000080" stroke-width="1.2" fill="none"/><path d="M3 5l6-5" stroke="#f0a020" stroke-width="1.5"/><path d="M1 5l3-1" stroke="#000" stroke-width="1"/></g><g transform="translate(38,0)"><rect x="0.5" y="0.5" width="9" height="6" fill="#fff" stroke="#3f7fe0"/><path d="M2 2h2v2h2M7 2.500h1" stroke="#0000c0" fill="none"/><path d="M4 5h4" stroke="#f06020"/></g></svg></div>
<div class="t " style="left:1230px;top:1167px;font-family:'Liberation Mono',monospace;font-size:11.667px">100.00%</div>
<div class="t " style="left:1286px;top:1167px;font-family:'Liberation Mono',monospace;font-size:11.667px">(-96,-86)</div>
<div class="t " style="left:1355px;top:1167px;font-family:'Liberation Mono',monospace;font-size:11.667px">(9,775)</div>
<div class="t " style="left:1409px;top:1167px;font-family:'Liberation Mono',monospace;font-size:11.667px">UNKNOWN</div>
<div class="t " style="left:1464px;top:1167px;font-family:'Liberation Mono',monospace;font-size:11.667px">826B9B00: sub_826B9AF8+8</div>
<div class="a " style="left:1280px;top:1165px;width:1px;height:13px;background:#c8c8c8"></div>
<div class="a " style="left:1349px;top:1165px;width:1px;height:13px;background:#c8c8c8"></div>
<div class="a " style="left:1404px;top:1165px;width:1px;height:13px;background:#c8c8c8"></div>
<div class="a " style="left:1459px;top:1165px;width:1px;height:13px;background:#c8c8c8"></div>
<div class="a " style="left:1633px;top:1165px;width:1px;height:13px;background:#c8c8c8"></div>
<div class="a " style="left:0px;top:1183px;width:1920px;height:17px;background:#f0f0f0"></div>
<div class="t " style="left:2px;top:1188px;font-family:'Liberation Mono',monospace;font-size:11.667px">AU:  idle</div>
<div class="t " style="left:85px;top:1188px;font-family:'Liberation Mono',monospace;font-size:11.667px">Down</div>
<div class="t " style="left:161px;top:1188px;font-family:'Liberation Mono',monospace;font-size:11.667px">Disk: 61GB</div>
<div class="a " style="left:80px;top:1185px;width:1px;height:13px;background:#c8c8c8"></div>
<div class="a " style="left:156px;top:1185px;width:1px;height:13px;background:#c8c8c8"></div>
<div class="a " style="left:232px;top:1185px;width:1px;height:13px;background:#c8c8c8"></div>
</body></html>
